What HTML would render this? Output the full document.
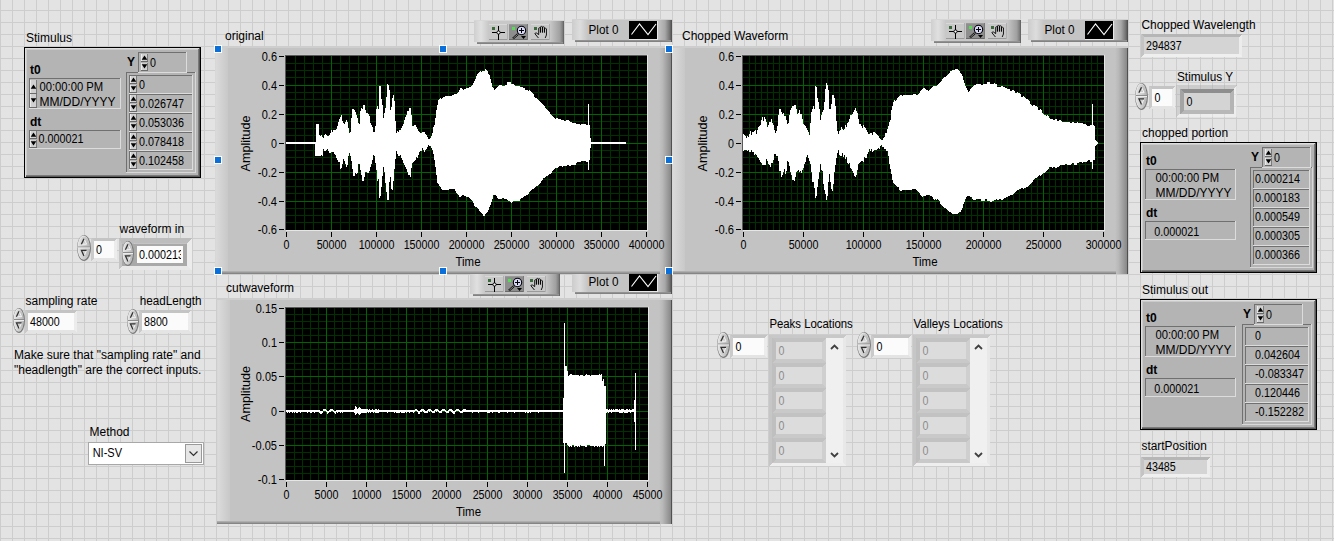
<!DOCTYPE html>
<html><head><meta charset="utf-8"><title>LabVIEW Front Panel</title>
<style>html,body{margin:0;padding:0;width:1334px;height:541px;overflow:hidden;background:#e3e3e3;}
text{font-family:"Liberation Sans",sans-serif;}</style></head>
<body><svg width="1334" height="541" viewBox="0 0 1334 541" style="display:block" font-family="Liberation Sans, sans-serif" shape-rendering="crispEdges"><defs><pattern id="grid" x="0" y="10" width="12" height="12" patternUnits="userSpaceOnUse"><rect width="12" height="12" fill="#e3e3e3"/><rect x="0" y="0" width="12" height="1" fill="#cdcdcd"/><rect x="0" y="0" width="1" height="12" fill="#cdcdcd"/></pattern><linearGradient id="g1" x1="0" y1="0" x2="1" y2="0"><stop offset="0" stop-color="#d6d6d6"/><stop offset="0.1" stop-color="#dadada"/><stop offset="1" stop-color="#c8c8c8"/></linearGradient><linearGradient id="g2" x1="0" y1="0" x2="1" y2="0"><stop offset="0" stop-color="#c3c3c3"/><stop offset="0.3" stop-color="#b8b8b8"/><stop offset="1" stop-color="#888888"/></linearGradient><linearGradient id="g3" x1="0" y1="0" x2="0" y2="1"><stop offset="0" stop-color="#b8b8b8"/><stop offset="0.5" stop-color="#9a9a9a"/><stop offset="1" stop-color="#7a7a7a"/></linearGradient><linearGradient id="g4" x1="0" y1="0" x2="1" y2="0"><stop offset="0" stop-color="#d6d6d6"/><stop offset="0.1" stop-color="#dadada"/><stop offset="1" stop-color="#c8c8c8"/></linearGradient><linearGradient id="g5" x1="0" y1="0" x2="1" y2="0"><stop offset="0" stop-color="#c3c3c3"/><stop offset="0.3" stop-color="#b8b8b8"/><stop offset="1" stop-color="#888888"/></linearGradient><linearGradient id="g6" x1="0" y1="0" x2="0" y2="1"><stop offset="0" stop-color="#b8b8b8"/><stop offset="0.5" stop-color="#9a9a9a"/><stop offset="1" stop-color="#7a7a7a"/></linearGradient><linearGradient id="g7" x1="0" y1="0" x2="1" y2="0"><stop offset="0" stop-color="#d6d6d6"/><stop offset="0.1" stop-color="#dadada"/><stop offset="1" stop-color="#c8c8c8"/></linearGradient><linearGradient id="g8" x1="0" y1="0" x2="1" y2="0"><stop offset="0" stop-color="#c3c3c3"/><stop offset="0.3" stop-color="#b8b8b8"/><stop offset="1" stop-color="#888888"/></linearGradient><linearGradient id="g9" x1="0" y1="0" x2="0" y2="1"><stop offset="0" stop-color="#b8b8b8"/><stop offset="0.5" stop-color="#9a9a9a"/><stop offset="1" stop-color="#7a7a7a"/></linearGradient><linearGradient id="g10" x1="0" y1="0" x2="1" y2="0"><stop offset="0" stop-color="#e2e2e2"/><stop offset="0.5" stop-color="#cdcdcd"/><stop offset="1" stop-color="#b4b4b4"/></linearGradient><linearGradient id="g11" x1="0" y1="0" x2="1" y2="0"><stop offset="0" stop-color="#e2e2e2"/><stop offset="0.5" stop-color="#cdcdcd"/><stop offset="1" stop-color="#b4b4b4"/></linearGradient><linearGradient id="g12" x1="0" y1="0" x2="1" y2="0"><stop offset="0" stop-color="#e2e2e2"/><stop offset="0.5" stop-color="#cdcdcd"/><stop offset="1" stop-color="#b4b4b4"/></linearGradient><linearGradient id="g13" x1="0" y1="0" x2="1" y2="0"><stop offset="0" stop-color="#e2e2e2"/><stop offset="0.5" stop-color="#cdcdcd"/><stop offset="1" stop-color="#b4b4b4"/></linearGradient><linearGradient id="g14" x1="0" y1="0" x2="1" y2="0"><stop offset="0" stop-color="#e2e2e2"/><stop offset="0.5" stop-color="#cdcdcd"/><stop offset="1" stop-color="#b4b4b4"/></linearGradient><linearGradient id="g15" x1="0" y1="0" x2="1" y2="0"><stop offset="0" stop-color="#e2e2e2"/><stop offset="0.5" stop-color="#cdcdcd"/><stop offset="1" stop-color="#b4b4b4"/></linearGradient><linearGradient id="g16" x1="0" y1="0" x2="1" y2="0"><stop offset="0" stop-color="#e2e2e2"/><stop offset="0.5" stop-color="#cdcdcd"/><stop offset="1" stop-color="#b4b4b4"/></linearGradient><linearGradient id="g17" x1="0" y1="0" x2="1" y2="0"><stop offset="0" stop-color="#e2e2e2"/><stop offset="0.5" stop-color="#cdcdcd"/><stop offset="1" stop-color="#b4b4b4"/></linearGradient><linearGradient id="g18" x1="0" y1="0" x2="1" y2="0"><stop offset="0" stop-color="#cfcfcf"/><stop offset="0.5" stop-color="#e0e0e0"/><stop offset="1" stop-color="#cacaca"/></linearGradient><linearGradient id="g19" x1="0" y1="0" x2="1" y2="0"><stop offset="0" stop-color="#c8c8c8"/><stop offset="0.7" stop-color="#a0a0a0"/><stop offset="0.93" stop-color="#777"/><stop offset="1" stop-color="#555"/></linearGradient><linearGradient id="g20" x1="0" y1="0" x2="0" y2="1"><stop offset="0" stop-color="#9a9a9a"/><stop offset="1" stop-color="#7a7a7a"/></linearGradient><linearGradient id="g21" x1="0" y1="0" x2="1" y2="0"><stop offset="0" stop-color="#cccccc"/><stop offset="0.5" stop-color="#dddddd"/><stop offset="1" stop-color="#c4c4c4"/></linearGradient><linearGradient id="g22" x1="0" y1="0" x2="1" y2="0"><stop offset="0" stop-color="#c4c4c4"/><stop offset="0.5" stop-color="#a8a8a8"/><stop offset="0.85" stop-color="#707070"/><stop offset="1" stop-color="#484848"/></linearGradient><linearGradient id="g23" x1="0" y1="0" x2="0" y2="1"><stop offset="0" stop-color="#9a9a9a"/><stop offset="1" stop-color="#7a7a7a"/></linearGradient><linearGradient id="g24" x1="0" y1="0" x2="1" y2="0"><stop offset="0" stop-color="#cfcfcf"/><stop offset="0.5" stop-color="#e0e0e0"/><stop offset="1" stop-color="#cacaca"/></linearGradient><linearGradient id="g25" x1="0" y1="0" x2="1" y2="0"><stop offset="0" stop-color="#c8c8c8"/><stop offset="0.7" stop-color="#a0a0a0"/><stop offset="0.93" stop-color="#777"/><stop offset="1" stop-color="#555"/></linearGradient><linearGradient id="g26" x1="0" y1="0" x2="0" y2="1"><stop offset="0" stop-color="#9a9a9a"/><stop offset="1" stop-color="#7a7a7a"/></linearGradient><linearGradient id="g27" x1="0" y1="0" x2="1" y2="0"><stop offset="0" stop-color="#cccccc"/><stop offset="0.5" stop-color="#dddddd"/><stop offset="1" stop-color="#c4c4c4"/></linearGradient><linearGradient id="g28" x1="0" y1="0" x2="1" y2="0"><stop offset="0" stop-color="#c4c4c4"/><stop offset="0.5" stop-color="#a8a8a8"/><stop offset="0.85" stop-color="#707070"/><stop offset="1" stop-color="#484848"/></linearGradient><linearGradient id="g29" x1="0" y1="0" x2="0" y2="1"><stop offset="0" stop-color="#9a9a9a"/><stop offset="1" stop-color="#7a7a7a"/></linearGradient><clipPath id="clipcut"><rect x="0" y="274" width="1334" height="30"/></clipPath><linearGradient id="g30" x1="0" y1="0" x2="1" y2="0"><stop offset="0" stop-color="#cfcfcf"/><stop offset="0.5" stop-color="#e0e0e0"/><stop offset="1" stop-color="#cacaca"/></linearGradient><linearGradient id="g31" x1="0" y1="0" x2="1" y2="0"><stop offset="0" stop-color="#c8c8c8"/><stop offset="0.7" stop-color="#a0a0a0"/><stop offset="0.93" stop-color="#777"/><stop offset="1" stop-color="#555"/></linearGradient><linearGradient id="g32" x1="0" y1="0" x2="0" y2="1"><stop offset="0" stop-color="#9a9a9a"/><stop offset="1" stop-color="#7a7a7a"/></linearGradient><linearGradient id="g33" x1="0" y1="0" x2="1" y2="0"><stop offset="0" stop-color="#cccccc"/><stop offset="0.5" stop-color="#dddddd"/><stop offset="1" stop-color="#c4c4c4"/></linearGradient><linearGradient id="g34" x1="0" y1="0" x2="1" y2="0"><stop offset="0" stop-color="#c4c4c4"/><stop offset="0.5" stop-color="#a8a8a8"/><stop offset="0.85" stop-color="#707070"/><stop offset="1" stop-color="#484848"/></linearGradient><linearGradient id="g35" x1="0" y1="0" x2="0" y2="1"><stop offset="0" stop-color="#9a9a9a"/><stop offset="1" stop-color="#7a7a7a"/></linearGradient></defs><rect x="0" y="0" width="1334" height="541" fill="url(#grid)" /><rect x="215" y="47" width="457" height="227" fill="#c3c3c3" /><rect x="215" y="47" width="13" height="227" fill="url(#g1)" /><rect x="659" y="47" width="12" height="227" fill="url(#g2)" /><rect x="671" y="47" width="1" height="227" fill="#505050" /><rect x="215" y="47" width="457" height="1" fill="#cecece" /><rect x="215" y="271" width="445" height="3" fill="url(#g3)" /><rect x="285" y="54" width="363" height="1" fill="#c8c8c8" /><rect x="285" y="55" width="362" height="1" fill="#5a5a5a" /><rect x="285" y="55" width="1" height="175" fill="#5a5a5a" /><rect x="286" y="230" width="362" height="1" fill="#e6e6e6" /><rect x="647" y="55" width="1" height="176" fill="#e6e6e6" /><rect x="286" y="56" width="361" height="174" fill="#000" /><path d="M295 56h1v174h-1zM304 56h1v174h-1zM313 56h1v174h-1zM322 56h1v174h-1zM340 56h1v174h-1zM349 56h1v174h-1zM358 56h1v174h-1zM367 56h1v174h-1zM385 56h1v174h-1zM394 56h1v174h-1zM403 56h1v174h-1zM412 56h1v174h-1zM430 56h1v174h-1zM439 56h1v174h-1zM448 56h1v174h-1zM457 56h1v174h-1zM475 56h1v174h-1zM484 56h1v174h-1zM493 56h1v174h-1zM502 56h1v174h-1zM520 56h1v174h-1zM529 56h1v174h-1zM538 56h1v174h-1zM547 56h1v174h-1zM565 56h1v174h-1zM574 56h1v174h-1zM583 56h1v174h-1zM592 56h1v174h-1zM610 56h1v174h-1zM619 56h1v174h-1zM628 56h1v174h-1zM637 56h1v174h-1zM286 63h361v1h-361zM286 70h361v1h-361zM286 77h361v1h-361zM286 92h361v1h-361zM286 99h361v1h-361zM286 106h361v1h-361zM286 121h361v1h-361zM286 128h361v1h-361zM286 135h361v1h-361zM286 150h361v1h-361zM286 157h361v1h-361zM286 164h361v1h-361zM286 179h361v1h-361zM286 186h361v1h-361zM286 193h361v1h-361zM286 208h361v1h-361zM286 215h361v1h-361zM286 222h361v1h-361z" fill="#003200"/><path d="M331 56h1v174h-1zM376 56h1v174h-1zM421 56h1v174h-1zM466 56h1v174h-1zM511 56h1v174h-1zM556 56h1v174h-1zM601 56h1v174h-1zM286 85h361v1h-361zM286 114h361v1h-361zM286 143h361v1h-361zM286 172h361v1h-361zM286 201h361v1h-361z" fill="#006400"/><rect x="286" y="232" width="1" height="5" fill="#000" /><text x="286.5" y="249" font-size="12" font-weight="normal" fill="#000" text-anchor="middle" textLength="5.95" lengthAdjust="spacingAndGlyphs" >0</text><rect x="331" y="232" width="1" height="5" fill="#000" /><text x="331.5" y="249" font-size="12" font-weight="normal" fill="#000" text-anchor="middle" textLength="29.75" lengthAdjust="spacingAndGlyphs" >50000</text><rect x="376" y="232" width="1" height="5" fill="#000" /><text x="376.5" y="249" font-size="12" font-weight="normal" fill="#000" text-anchor="middle" textLength="35.70" lengthAdjust="spacingAndGlyphs" >100000</text><rect x="421" y="232" width="1" height="5" fill="#000" /><text x="421.5" y="249" font-size="12" font-weight="normal" fill="#000" text-anchor="middle" textLength="35.70" lengthAdjust="spacingAndGlyphs" >150000</text><rect x="466" y="232" width="1" height="5" fill="#000" /><text x="466.5" y="249" font-size="12" font-weight="normal" fill="#000" text-anchor="middle" textLength="35.70" lengthAdjust="spacingAndGlyphs" >200000</text><rect x="511" y="232" width="1" height="5" fill="#000" /><text x="511.5" y="249" font-size="12" font-weight="normal" fill="#000" text-anchor="middle" textLength="35.70" lengthAdjust="spacingAndGlyphs" >250000</text><rect x="556" y="232" width="1" height="5" fill="#000" /><text x="556.5" y="249" font-size="12" font-weight="normal" fill="#000" text-anchor="middle" textLength="35.70" lengthAdjust="spacingAndGlyphs" >300000</text><rect x="601" y="232" width="1" height="5" fill="#000" /><text x="601.5" y="249" font-size="12" font-weight="normal" fill="#000" text-anchor="middle" textLength="35.70" lengthAdjust="spacingAndGlyphs" >350000</text><rect x="646" y="232" width="1" height="5" fill="#000" /><text x="646.5" y="249" font-size="12" font-weight="normal" fill="#000" text-anchor="middle" textLength="35.70" lengthAdjust="spacingAndGlyphs" >400000</text><rect x="279" y="56" width="5" height="1" fill="#000" /><text x="277" y="61" font-size="12" font-weight="normal" fill="#000" text-anchor="end" textLength="15.23" lengthAdjust="spacingAndGlyphs" >0.6</text><rect x="279" y="85" width="5" height="1" fill="#000" /><text x="277" y="90" font-size="12" font-weight="normal" fill="#000" text-anchor="end" textLength="15.23" lengthAdjust="spacingAndGlyphs" >0.4</text><rect x="279" y="114" width="5" height="1" fill="#000" /><text x="277" y="119" font-size="12" font-weight="normal" fill="#000" text-anchor="end" textLength="15.23" lengthAdjust="spacingAndGlyphs" >0.2</text><rect x="279" y="143" width="5" height="1" fill="#000" /><text x="277" y="148" font-size="12" font-weight="normal" fill="#000" text-anchor="end" textLength="5.95" lengthAdjust="spacingAndGlyphs" >0</text><rect x="279" y="172" width="5" height="1" fill="#000" /><text x="277" y="177" font-size="12" font-weight="normal" fill="#000" text-anchor="end" textLength="19.23" lengthAdjust="spacingAndGlyphs" >-0.2</text><rect x="279" y="201" width="5" height="1" fill="#000" /><text x="277" y="206" font-size="12" font-weight="normal" fill="#000" text-anchor="end" textLength="19.23" lengthAdjust="spacingAndGlyphs" >-0.4</text><rect x="279" y="229" width="5" height="1" fill="#000" /><text x="277" y="234" font-size="12" font-weight="normal" fill="#000" text-anchor="end" textLength="19.23" lengthAdjust="spacingAndGlyphs" >-0.6</text><text x="468.0" y="266" font-size="12" font-weight="normal" fill="#000" text-anchor="middle" textLength="25.00" lengthAdjust="spacingAndGlyphs" >Time</text><text x="0" y="0" font-size="12" fill="#000" text-anchor="middle" textLength="56" lengthAdjust="spacingAndGlyphs" transform="translate(249.5,143.5) rotate(-90)">Amplitude</text><text x="225" y="40" font-size="12" font-weight="normal" fill="#000" text-anchor="start"  >original</text><rect x="672" y="47" width="456" height="227" fill="#c3c3c3" /><rect x="672" y="47" width="13" height="227" fill="url(#g4)" /><rect x="1115" y="47" width="12" height="227" fill="url(#g5)" /><rect x="1127" y="47" width="1" height="227" fill="#505050" /><rect x="672" y="47" width="456" height="1" fill="#cecece" /><rect x="672" y="271" width="444" height="3" fill="url(#g6)" /><rect x="742" y="54" width="363" height="1" fill="#c8c8c8" /><rect x="742" y="55" width="362" height="1" fill="#5a5a5a" /><rect x="742" y="55" width="1" height="175" fill="#5a5a5a" /><rect x="743" y="230" width="362" height="1" fill="#e6e6e6" /><rect x="1104" y="55" width="1" height="176" fill="#e6e6e6" /><rect x="743" y="56" width="361" height="174" fill="#000" /><path d="M749 56h1v174h-1zM755 56h1v174h-1zM761 56h1v174h-1zM767 56h1v174h-1zM773 56h1v174h-1zM779 56h1v174h-1zM785 56h1v174h-1zM791 56h1v174h-1zM797 56h1v174h-1zM809 56h1v174h-1zM815 56h1v174h-1zM821 56h1v174h-1zM827 56h1v174h-1zM833 56h1v174h-1zM839 56h1v174h-1zM845 56h1v174h-1zM851 56h1v174h-1zM857 56h1v174h-1zM869 56h1v174h-1zM875 56h1v174h-1zM881 56h1v174h-1zM887 56h1v174h-1zM893 56h1v174h-1zM899 56h1v174h-1zM905 56h1v174h-1zM911 56h1v174h-1zM917 56h1v174h-1zM929 56h1v174h-1zM935 56h1v174h-1zM941 56h1v174h-1zM947 56h1v174h-1zM953 56h1v174h-1zM959 56h1v174h-1zM965 56h1v174h-1zM971 56h1v174h-1zM977 56h1v174h-1zM989 56h1v174h-1zM995 56h1v174h-1zM1001 56h1v174h-1zM1007 56h1v174h-1zM1013 56h1v174h-1zM1019 56h1v174h-1zM1025 56h1v174h-1zM1031 56h1v174h-1zM1037 56h1v174h-1zM1049 56h1v174h-1zM1055 56h1v174h-1zM1061 56h1v174h-1zM1067 56h1v174h-1zM1073 56h1v174h-1zM1079 56h1v174h-1zM1085 56h1v174h-1zM1091 56h1v174h-1zM1097 56h1v174h-1zM743 63h361v1h-361zM743 70h361v1h-361zM743 77h361v1h-361zM743 92h361v1h-361zM743 99h361v1h-361zM743 106h361v1h-361zM743 121h361v1h-361zM743 128h361v1h-361zM743 135h361v1h-361zM743 150h361v1h-361zM743 157h361v1h-361zM743 164h361v1h-361zM743 179h361v1h-361zM743 186h361v1h-361zM743 193h361v1h-361zM743 208h361v1h-361zM743 215h361v1h-361zM743 222h361v1h-361z" fill="#003200"/><path d="M803 56h1v174h-1zM863 56h1v174h-1zM923 56h1v174h-1zM983 56h1v174h-1zM1043 56h1v174h-1zM743 85h361v1h-361zM743 114h361v1h-361zM743 143h361v1h-361zM743 172h361v1h-361zM743 201h361v1h-361z" fill="#006400"/><rect x="743" y="232" width="1" height="5" fill="#000" /><text x="743.5" y="249" font-size="12" font-weight="normal" fill="#000" text-anchor="middle" textLength="5.95" lengthAdjust="spacingAndGlyphs" >0</text><rect x="803" y="232" width="1" height="5" fill="#000" /><text x="803.5" y="249" font-size="12" font-weight="normal" fill="#000" text-anchor="middle" textLength="29.75" lengthAdjust="spacingAndGlyphs" >50000</text><rect x="863" y="232" width="1" height="5" fill="#000" /><text x="863.5" y="249" font-size="12" font-weight="normal" fill="#000" text-anchor="middle" textLength="35.70" lengthAdjust="spacingAndGlyphs" >100000</text><rect x="923" y="232" width="1" height="5" fill="#000" /><text x="923.5" y="249" font-size="12" font-weight="normal" fill="#000" text-anchor="middle" textLength="35.70" lengthAdjust="spacingAndGlyphs" >150000</text><rect x="983" y="232" width="1" height="5" fill="#000" /><text x="983.5" y="249" font-size="12" font-weight="normal" fill="#000" text-anchor="middle" textLength="35.70" lengthAdjust="spacingAndGlyphs" >200000</text><rect x="1043" y="232" width="1" height="5" fill="#000" /><text x="1043.5" y="249" font-size="12" font-weight="normal" fill="#000" text-anchor="middle" textLength="35.70" lengthAdjust="spacingAndGlyphs" >250000</text><rect x="1103" y="232" width="1" height="5" fill="#000" /><text x="1103.5" y="249" font-size="12" font-weight="normal" fill="#000" text-anchor="middle" textLength="35.70" lengthAdjust="spacingAndGlyphs" >300000</text><rect x="736" y="56" width="5" height="1" fill="#000" /><text x="734" y="61" font-size="12" font-weight="normal" fill="#000" text-anchor="end" textLength="15.23" lengthAdjust="spacingAndGlyphs" >0.6</text><rect x="736" y="85" width="5" height="1" fill="#000" /><text x="734" y="90" font-size="12" font-weight="normal" fill="#000" text-anchor="end" textLength="15.23" lengthAdjust="spacingAndGlyphs" >0.4</text><rect x="736" y="114" width="5" height="1" fill="#000" /><text x="734" y="119" font-size="12" font-weight="normal" fill="#000" text-anchor="end" textLength="15.23" lengthAdjust="spacingAndGlyphs" >0.2</text><rect x="736" y="143" width="5" height="1" fill="#000" /><text x="734" y="148" font-size="12" font-weight="normal" fill="#000" text-anchor="end" textLength="5.95" lengthAdjust="spacingAndGlyphs" >0</text><rect x="736" y="172" width="5" height="1" fill="#000" /><text x="734" y="177" font-size="12" font-weight="normal" fill="#000" text-anchor="end" textLength="19.23" lengthAdjust="spacingAndGlyphs" >-0.2</text><rect x="736" y="201" width="5" height="1" fill="#000" /><text x="734" y="206" font-size="12" font-weight="normal" fill="#000" text-anchor="end" textLength="19.23" lengthAdjust="spacingAndGlyphs" >-0.4</text><rect x="736" y="229" width="5" height="1" fill="#000" /><text x="734" y="234" font-size="12" font-weight="normal" fill="#000" text-anchor="end" textLength="19.23" lengthAdjust="spacingAndGlyphs" >-0.6</text><text x="925.0" y="266" font-size="12" font-weight="normal" fill="#000" text-anchor="middle" textLength="25.00" lengthAdjust="spacingAndGlyphs" >Time</text><text x="0" y="0" font-size="12" fill="#000" text-anchor="middle" textLength="56" lengthAdjust="spacingAndGlyphs" transform="translate(706.5,143.5) rotate(-90)">Amplitude</text><text x="682" y="40" font-size="12" font-weight="normal" fill="#000" text-anchor="start"  >Chopped Waveform</text><rect x="217" y="299" width="455" height="225" fill="#c3c3c3" /><rect x="217" y="299" width="13" height="225" fill="url(#g7)" /><rect x="659" y="299" width="12" height="225" fill="url(#g8)" /><rect x="671" y="299" width="1" height="225" fill="#505050" /><rect x="217" y="299" width="455" height="1" fill="#cecece" /><rect x="217" y="521" width="443" height="3" fill="url(#g9)" /><rect x="285" y="306" width="364" height="1" fill="#c8c8c8" /><rect x="285" y="307" width="363" height="1" fill="#5a5a5a" /><rect x="285" y="307" width="1" height="173" fill="#5a5a5a" /><rect x="286" y="480" width="363" height="1" fill="#e6e6e6" /><rect x="648" y="307" width="1" height="174" fill="#e6e6e6" /><rect x="286" y="308" width="362" height="172" fill="#000" /><path d="M294 308h1v172h-1zM302 308h1v172h-1zM310 308h1v172h-1zM318 308h1v172h-1zM334 308h1v172h-1zM342 308h1v172h-1zM350 308h1v172h-1zM358 308h1v172h-1zM374 308h1v172h-1zM382 308h1v172h-1zM390 308h1v172h-1zM398 308h1v172h-1zM414 308h1v172h-1zM422 308h1v172h-1zM430 308h1v172h-1zM438 308h1v172h-1zM454 308h1v172h-1zM462 308h1v172h-1zM471 308h1v172h-1zM479 308h1v172h-1zM495 308h1v172h-1zM503 308h1v172h-1zM511 308h1v172h-1zM519 308h1v172h-1zM535 308h1v172h-1zM543 308h1v172h-1zM551 308h1v172h-1zM559 308h1v172h-1zM575 308h1v172h-1zM583 308h1v172h-1zM591 308h1v172h-1zM599 308h1v172h-1zM615 308h1v172h-1zM623 308h1v172h-1zM631 308h1v172h-1zM639 308h1v172h-1zM286 314h362v1h-362zM286 321h362v1h-362zM286 328h362v1h-362zM286 335h362v1h-362zM286 349h362v1h-362zM286 356h362v1h-362zM286 363h362v1h-362zM286 369h362v1h-362zM286 383h362v1h-362zM286 390h362v1h-362zM286 397h362v1h-362zM286 404h362v1h-362zM286 418h362v1h-362zM286 424h362v1h-362zM286 431h362v1h-362zM286 438h362v1h-362zM286 452h362v1h-362zM286 459h362v1h-362zM286 466h362v1h-362zM286 473h362v1h-362z" fill="#003200"/><path d="M326 308h1v172h-1zM366 308h1v172h-1zM406 308h1v172h-1zM446 308h1v172h-1zM487 308h1v172h-1zM527 308h1v172h-1zM567 308h1v172h-1zM607 308h1v172h-1zM286 342h362v1h-362zM286 376h362v1h-362zM286 411h362v1h-362zM286 445h362v1h-362z" fill="#006400"/><rect x="286" y="482" width="1" height="5" fill="#000" /><text x="286.5" y="499" font-size="12" font-weight="normal" fill="#000" text-anchor="middle" textLength="5.95" lengthAdjust="spacingAndGlyphs" >0</text><rect x="326" y="482" width="1" height="5" fill="#000" /><text x="326.5" y="499" font-size="12" font-weight="normal" fill="#000" text-anchor="middle" textLength="23.80" lengthAdjust="spacingAndGlyphs" >5000</text><rect x="366" y="482" width="1" height="5" fill="#000" /><text x="366.5" y="499" font-size="12" font-weight="normal" fill="#000" text-anchor="middle" textLength="29.75" lengthAdjust="spacingAndGlyphs" >10000</text><rect x="406" y="482" width="1" height="5" fill="#000" /><text x="406.5" y="499" font-size="12" font-weight="normal" fill="#000" text-anchor="middle" textLength="29.75" lengthAdjust="spacingAndGlyphs" >15000</text><rect x="446" y="482" width="1" height="5" fill="#000" /><text x="446.5" y="499" font-size="12" font-weight="normal" fill="#000" text-anchor="middle" textLength="29.75" lengthAdjust="spacingAndGlyphs" >20000</text><rect x="487" y="482" width="1" height="5" fill="#000" /><text x="487.5" y="499" font-size="12" font-weight="normal" fill="#000" text-anchor="middle" textLength="29.75" lengthAdjust="spacingAndGlyphs" >25000</text><rect x="527" y="482" width="1" height="5" fill="#000" /><text x="527.5" y="499" font-size="12" font-weight="normal" fill="#000" text-anchor="middle" textLength="29.75" lengthAdjust="spacingAndGlyphs" >30000</text><rect x="567" y="482" width="1" height="5" fill="#000" /><text x="567.5" y="499" font-size="12" font-weight="normal" fill="#000" text-anchor="middle" textLength="29.75" lengthAdjust="spacingAndGlyphs" >35000</text><rect x="607" y="482" width="1" height="5" fill="#000" /><text x="607.5" y="499" font-size="12" font-weight="normal" fill="#000" text-anchor="middle" textLength="29.75" lengthAdjust="spacingAndGlyphs" >40000</text><rect x="647" y="482" width="1" height="5" fill="#000" /><text x="647.5" y="499" font-size="12" font-weight="normal" fill="#000" text-anchor="middle" textLength="29.75" lengthAdjust="spacingAndGlyphs" >45000</text><rect x="279" y="308" width="5" height="1" fill="#000" /><text x="277" y="313" font-size="12" font-weight="normal" fill="#000" text-anchor="end" textLength="21.18" lengthAdjust="spacingAndGlyphs" >0.15</text><rect x="279" y="342" width="5" height="1" fill="#000" /><text x="277" y="347" font-size="12" font-weight="normal" fill="#000" text-anchor="end" textLength="15.23" lengthAdjust="spacingAndGlyphs" >0.1</text><rect x="279" y="376" width="5" height="1" fill="#000" /><text x="277" y="381" font-size="12" font-weight="normal" fill="#000" text-anchor="end" textLength="21.18" lengthAdjust="spacingAndGlyphs" >0.05</text><rect x="279" y="411" width="5" height="1" fill="#000" /><text x="277" y="416" font-size="12" font-weight="normal" fill="#000" text-anchor="end" textLength="5.95" lengthAdjust="spacingAndGlyphs" >0</text><rect x="279" y="445" width="5" height="1" fill="#000" /><text x="277" y="450" font-size="12" font-weight="normal" fill="#000" text-anchor="end" textLength="25.18" lengthAdjust="spacingAndGlyphs" >-0.05</text><rect x="279" y="479" width="5" height="1" fill="#000" /><text x="277" y="484" font-size="12" font-weight="normal" fill="#000" text-anchor="end" textLength="19.23" lengthAdjust="spacingAndGlyphs" >-0.1</text><text x="468.5" y="516" font-size="12" font-weight="normal" fill="#000" text-anchor="middle" textLength="25.00" lengthAdjust="spacingAndGlyphs" >Time</text><text x="0" y="0" font-size="12" fill="#000" text-anchor="middle" textLength="56" lengthAdjust="spacingAndGlyphs" transform="translate(249.5,394) rotate(-90)">Amplitude</text><text x="226" y="292" font-size="12" font-weight="normal" fill="#000" text-anchor="start"  >cutwaveform</text><rect x="214" y="45" width="8" height="8" fill="#ffffff" /><rect x="215" y="46" width="6" height="6" fill="#0a6fd8" /><rect x="214" y="156" width="8" height="8" fill="#ffffff" /><rect x="215" y="157" width="6" height="6" fill="#0a6fd8" /><rect x="214" y="267" width="8" height="8" fill="#ffffff" /><rect x="215" y="268" width="6" height="6" fill="#0a6fd8" /><rect x="439" y="45" width="8" height="8" fill="#ffffff" /><rect x="440" y="46" width="6" height="6" fill="#0a6fd8" /><rect x="439" y="267" width="8" height="8" fill="#ffffff" /><rect x="440" y="268" width="6" height="6" fill="#0a6fd8" /><rect x="665" y="45" width="8" height="8" fill="#ffffff" /><rect x="666" y="46" width="6" height="6" fill="#0a6fd8" /><rect x="665" y="156" width="8" height="8" fill="#ffffff" /><rect x="666" y="157" width="6" height="6" fill="#0a6fd8" /><rect x="665" y="267" width="8" height="8" fill="#ffffff" /><rect x="666" y="268" width="6" height="6" fill="#0a6fd8" /><svg x="286" y="56" width="361" height="174" viewBox="286 56 361 174" overflow="hidden"><path d="M286 142h1v2h-1zM287 142h1v2h-1zM288 142h1v2h-1zM289 142h1v2h-1zM290 142h1v2h-1zM291 142h1v2h-1zM292 142h1v2h-1zM293 142h1v2h-1zM294 142h1v2h-1zM295 142h1v2h-1zM296 142h1v2h-1zM297 142h1v2h-1zM298 142h1v2h-1zM299 142h1v2h-1zM300 142h1v2h-1zM301 142h1v2h-1zM302 142h1v2h-1zM303 142h1v2h-1zM304 142h1v2h-1zM305 142h1v2h-1zM306 142h1v2h-1zM307 142h1v2h-1zM308 142h1v2h-1zM309 142h1v2h-1zM310 142h1v2h-1zM311 142h1v2h-1zM312 142h1v2h-1zM313 142h1v2h-1zM314 142h1v2h-1zM315 142h1v14h-1zM316 124h1v32h-1zM317 124h1v32h-1zM318 124h1v32h-1zM319 135h1v21h-1zM320 136h1v20h-1zM321 135h1v20h-1zM322 137h1v19h-1zM323 138h1v11h-1zM324 135h1v16h-1zM325 134h1v17h-1zM326 135h1v15h-1zM327 136h1v13h-1zM328 136h1v15h-1zM329 135h1v18h-1zM330 133h1v20h-1zM331 130h1v22h-1zM332 132h1v20h-1zM333 130h1v22h-1zM334 130h1v24h-1zM335 130h1v25h-1zM336 129h1v29h-1zM337 126h1v34h-1zM338 122h1v40h-1zM339 119h1v43h-1zM340 117h1v52h-1zM341 115h1v53h-1zM342 121h1v43h-1zM343 123h1v36h-1zM344 124h1v37h-1zM345 122h1v42h-1zM346 120h1v47h-1zM347 122h1v43h-1zM348 128h1v28h-1zM349 133h1v20h-1zM350 132h1v24h-1zM351 118h1v43h-1zM352 109h1v60h-1zM353 109h1v67h-1zM354 110h1v66h-1zM355 112h1v61h-1zM356 115h1v59h-1zM357 118h1v55h-1zM358 123h1v41h-1zM359 124h1v40h-1zM360 111h1v59h-1zM361 108h1v67h-1zM362 109h1v72h-1zM363 105h1v76h-1zM364 105h1v72h-1zM365 110h1v62h-1zM366 113h1v59h-1zM367 113h1v60h-1zM368 114h1v59h-1zM369 116h1v55h-1zM370 123h1v44h-1zM371 125h1v39h-1zM372 127h1v33h-1zM373 132h1v23h-1zM374 132h1v24h-1zM375 126h1v37h-1zM376 109h1v61h-1zM377 106h1v75h-1zM378 109h1v70h-1zM379 86h1v112h-1zM380 86h1v110h-1zM381 99h1v88h-1zM382 105h1v71h-1zM383 118h1v49h-1zM384 113h1v59h-1zM385 108h1v75h-1zM386 97h1v95h-1zM387 84h1v116h-1zM388 85h1v115h-1zM389 90h1v92h-1zM390 110h1v67h-1zM391 107h1v82h-1zM392 98h1v92h-1zM393 95h1v86h-1zM394 101h1v68h-1zM395 121h1v38h-1zM396 133h1v18h-1zM397 131h1v23h-1zM398 132h1v24h-1zM399 130h1v26h-1zM400 130h1v25h-1zM401 128h1v30h-1zM402 126h1v34h-1zM403 124h1v39h-1zM404 120h1v45h-1zM405 117h1v50h-1zM406 115h1v54h-1zM407 111h1v61h-1zM408 111h1v64h-1zM409 108h1v67h-1zM410 108h1v69h-1zM411 115h1v53h-1zM412 126h1v37h-1zM413 126h1v36h-1zM414 125h1v36h-1zM415 125h1v35h-1zM416 127h1v30h-1zM417 129h1v29h-1zM418 131h1v24h-1zM419 132h1v20h-1zM420 133h1v18h-1zM421 133h1v18h-1zM422 132h1v16h-1zM423 132h1v18h-1zM424 132h1v20h-1zM425 134h1v16h-1zM426 135h1v14h-1zM427 137h1v10h-1zM428 139h1v6h-1zM429 139h1v7h-1zM430 138h1v8h-1zM431 136h1v12h-1zM432 133h1v17h-1zM433 127h1v27h-1zM434 125h1v35h-1zM435 118h1v49h-1zM436 110h1v65h-1zM437 105h1v78h-1zM438 100h1v84h-1zM439 99h1v87h-1zM440 98h1v89h-1zM441 99h1v90h-1zM442 98h1v92h-1zM443 97h1v93h-1zM444 97h1v93h-1zM445 96h1v94h-1zM446 96h1v94h-1zM447 96h1v94h-1zM448 96h1v94h-1zM449 96h1v93h-1zM450 96h1v93h-1zM451 96h1v93h-1zM452 95h1v94h-1zM453 95h1v94h-1zM454 94h1v95h-1zM455 94h1v97h-1zM456 94h1v99h-1zM457 93h1v101h-1zM458 92h1v103h-1zM459 90h1v107h-1zM460 88h1v109h-1zM461 88h1v108h-1zM462 89h1v106h-1zM463 90h1v105h-1zM464 89h1v107h-1zM465 89h1v107h-1zM466 88h1v109h-1zM467 88h1v109h-1zM468 88h1v109h-1zM469 87h1v111h-1zM470 87h1v112h-1zM471 86h1v114h-1zM472 85h1v116h-1zM473 83h1v120h-1zM474 81h1v125h-1zM475 79h1v128h-1zM476 76h1v131h-1zM477 74h1v134h-1zM478 73h1v136h-1zM479 72h1v139h-1zM480 71h1v141h-1zM481 72h1v141h-1zM482 71h1v143h-1zM483 71h1v145h-1zM484 71h1v145h-1zM485 69h1v145h-1zM486 70h1v143h-1zM487 71h1v141h-1zM488 74h1v136h-1zM489 75h1v132h-1zM490 79h1v126h-1zM491 83h1v119h-1zM492 87h1v112h-1zM493 88h1v107h-1zM494 90h1v105h-1zM495 89h1v106h-1zM496 88h1v108h-1zM497 87h1v111h-1zM498 86h1v113h-1zM499 85h1v114h-1zM500 85h1v114h-1zM501 85h1v114h-1zM502 86h1v112h-1zM503 86h1v112h-1zM504 86h1v113h-1zM505 85h1v114h-1zM506 85h1v114h-1zM507 82h1v118h-1zM508 82h1v119h-1zM509 82h1v119h-1zM510 82h1v120h-1zM511 84h1v119h-1zM512 84h1v118h-1zM513 84h1v117h-1zM514 85h1v116h-1zM515 86h1v115h-1zM516 86h1v115h-1zM517 86h1v115h-1zM518 86h1v115h-1zM519 86h1v115h-1zM520 87h1v112h-1zM521 87h1v111h-1zM522 87h1v111h-1zM523 88h1v109h-1zM524 88h1v108h-1zM525 90h1v106h-1zM526 90h1v105h-1zM527 90h1v105h-1zM528 91h1v103h-1zM529 90h1v102h-1zM530 91h1v100h-1zM531 92h1v98h-1zM532 93h1v96h-1zM533 94h1v95h-1zM534 97h1v91h-1zM535 98h1v89h-1zM536 98h1v88h-1zM537 99h1v87h-1zM538 100h1v85h-1zM539 101h1v83h-1zM540 102h1v81h-1zM541 103h1v78h-1zM542 104h1v76h-1zM543 105h1v73h-1zM544 106h1v72h-1zM545 108h1v69h-1zM546 109h1v67h-1zM547 110h1v66h-1zM548 111h1v64h-1zM549 112h1v62h-1zM550 114h1v60h-1zM551 115h1v58h-1zM552 116h1v55h-1zM553 117h1v53h-1zM554 118h1v51h-1zM555 119h1v49h-1zM556 118h1v50h-1zM557 118h1v50h-1zM558 119h1v48h-1zM559 119h1v47h-1zM560 119h1v47h-1zM561 120h1v46h-1zM562 120h1v47h-1zM563 120h1v46h-1zM564 121h1v45h-1zM565 121h1v45h-1zM566 120h1v46h-1zM567 120h1v45h-1zM568 120h1v45h-1zM569 121h1v45h-1zM570 122h1v44h-1zM571 122h1v43h-1zM572 123h1v42h-1zM573 123h1v42h-1zM574 123h1v42h-1zM575 123h1v42h-1zM576 124h1v39h-1zM577 124h1v38h-1zM578 124h1v38h-1zM579 124h1v38h-1zM580 125h1v37h-1zM581 124h1v37h-1zM582 124h1v37h-1zM583 124h1v37h-1zM584 124h1v37h-1zM585 124h1v37h-1zM586 125h1v37h-1zM587 125h1v37h-1zM588 125h1v36h-1zM589 125h1v35h-1zM590 138h1v10h-1zM591 142h1v2h-1zM592 142h1v2h-1zM593 142h1v2h-1zM594 142h1v2h-1zM595 142h1v2h-1zM596 142h1v2h-1zM597 142h1v2h-1zM598 142h1v2h-1zM599 142h1v2h-1zM600 142h1v2h-1zM601 142h1v2h-1zM602 142h1v2h-1zM603 142h1v2h-1zM604 142h1v2h-1zM605 142h1v2h-1zM606 142h1v2h-1zM607 142h1v2h-1zM608 142h1v2h-1zM609 142h1v2h-1zM610 142h1v2h-1zM611 142h1v2h-1zM612 142h1v2h-1zM613 142h1v2h-1zM614 142h1v2h-1zM615 142h1v2h-1zM616 142h1v2h-1zM617 142h1v2h-1zM618 142h1v2h-1zM619 142h1v2h-1zM620 142h1v2h-1zM621 142h1v2h-1zM622 142h1v2h-1zM623 142h1v2h-1zM624 142h1v2h-1zM625 142h1v2h-1z" fill="#fff"/><rect x="588" y="104" width="1" height="66" fill="#fff"/></svg><svg x="743" y="56" width="361" height="174" viewBox="743 56 361 174" overflow="hidden"><path d="M743 134h1v17h-1zM744 135h1v15h-1zM745 136h1v14h-1zM746 138h1v12h-1zM747 136h1v15h-1zM748 137h1v13h-1zM749 134h1v18h-1zM750 131h1v21h-1zM751 135h1v15h-1zM752 132h1v20h-1zM753 132h1v20h-1zM754 131h1v24h-1zM755 130h1v24h-1zM756 134h1v21h-1zM757 130h1v27h-1zM758 127h1v31h-1zM759 126h1v34h-1zM760 125h1v37h-1zM761 120h1v43h-1zM762 117h1v48h-1zM763 121h1v44h-1zM764 117h1v48h-1zM765 119h1v46h-1zM766 122h1v37h-1zM767 127h1v34h-1zM768 125h1v39h-1zM769 122h1v43h-1zM770 122h1v45h-1zM771 119h1v44h-1zM772 123h1v40h-1zM773 125h1v35h-1zM774 130h1v24h-1zM775 133h1v21h-1zM776 131h1v25h-1zM777 126h1v30h-1zM778 115h1v46h-1zM779 109h1v62h-1zM780 109h1v62h-1zM781 112h1v65h-1zM782 114h1v61h-1zM783 113h1v59h-1zM784 116h1v53h-1zM785 116h1v58h-1zM786 120h1v51h-1zM787 124h1v37h-1zM788 123h1v39h-1zM789 115h1v51h-1zM790 110h1v62h-1zM791 108h1v67h-1zM792 106h1v74h-1zM793 106h1v74h-1zM794 105h1v76h-1zM795 105h1v72h-1zM796 109h1v63h-1zM797 114h1v57h-1zM798 113h1v57h-1zM799 110h1v62h-1zM800 114h1v57h-1zM801 114h1v59h-1zM802 119h1v51h-1zM803 124h1v44h-1zM804 125h1v39h-1zM805 126h1v36h-1zM806 128h1v29h-1zM807 130h1v25h-1zM808 132h1v26h-1zM809 135h1v26h-1zM810 123h1v41h-1zM811 112h1v60h-1zM812 109h1v73h-1zM813 106h1v76h-1zM814 109h1v79h-1zM815 86h1v112h-1zM816 87h1v109h-1zM817 98h1v89h-1zM818 102h1v77h-1zM819 109h1v63h-1zM820 120h1v44h-1zM821 115h1v55h-1zM822 112h1v59h-1zM823 110h1v74h-1zM824 102h1v88h-1zM825 89h1v105h-1zM826 83h1v117h-1zM827 85h1v111h-1zM828 90h1v92h-1zM829 109h1v65h-1zM830 109h1v73h-1zM831 104h1v85h-1zM832 95h1v96h-1zM833 95h1v89h-1zM834 98h1v74h-1zM835 106h1v59h-1zM836 121h1v37h-1zM837 131h1v22h-1zM838 134h1v16h-1zM839 131h1v24h-1zM840 130h1v26h-1zM841 127h1v29h-1zM842 129h1v24h-1zM843 130h1v27h-1zM844 129h1v26h-1zM845 125h1v34h-1zM846 127h1v30h-1zM847 123h1v40h-1zM848 122h1v42h-1zM849 119h1v44h-1zM850 115h1v53h-1zM851 115h1v54h-1zM852 114h1v57h-1zM853 112h1v61h-1zM854 110h1v66h-1zM855 108h1v69h-1zM856 111h1v64h-1zM857 113h1v57h-1zM858 119h1v45h-1zM859 124h1v39h-1zM860 124h1v38h-1zM861 126h1v35h-1zM862 128h1v33h-1zM863 125h1v37h-1zM864 127h1v30h-1zM865 128h1v30h-1zM866 130h1v28h-1zM867 132h1v22h-1zM868 134h1v18h-1zM869 134h1v15h-1zM870 133h1v18h-1zM871 133h1v16h-1zM872 135h1v17h-1zM873 132h1v19h-1zM874 132h1v18h-1zM875 133h1v17h-1zM876 134h1v16h-1zM877 135h1v14h-1zM878 136h1v12h-1zM879 138h1v11h-1zM880 139h1v7h-1zM881 140h1v5h-1zM882 140h1v7h-1zM883 138h1v9h-1zM884 137h1v12h-1zM885 133h1v16h-1zM886 133h1v18h-1zM887 129h1v22h-1zM888 126h1v30h-1zM889 122h1v42h-1zM890 120h1v49h-1zM891 110h1v64h-1zM892 106h1v74h-1zM893 102h1v81h-1zM894 100h1v84h-1zM895 101h1v84h-1zM896 100h1v86h-1zM897 98h1v89h-1zM898 97h1v90h-1zM899 96h1v94h-1zM900 95h1v96h-1zM901 95h1v96h-1zM902 96h1v94h-1zM903 95h1v95h-1zM904 95h1v95h-1zM905 95h1v95h-1zM906 95h1v95h-1zM907 95h1v95h-1zM908 95h1v95h-1zM909 95h1v95h-1zM910 95h1v95h-1zM911 95h1v95h-1zM912 95h1v94h-1zM913 94h1v95h-1zM914 94h1v95h-1zM915 94h1v95h-1zM916 95h1v95h-1zM917 95h1v96h-1zM918 94h1v98h-1zM919 93h1v100h-1zM920 91h1v104h-1zM921 90h1v106h-1zM922 89h1v108h-1zM923 88h1v108h-1zM924 88h1v108h-1zM925 89h1v107h-1zM926 90h1v105h-1zM927 90h1v105h-1zM928 91h1v104h-1zM929 90h1v105h-1zM930 89h1v107h-1zM931 88h1v108h-1zM932 87h1v110h-1zM933 86h1v113h-1zM934 86h1v114h-1zM935 86h1v113h-1zM936 86h1v114h-1zM937 85h1v114h-1zM938 84h1v116h-1zM939 83h1v118h-1zM940 82h1v122h-1zM941 81h1v124h-1zM942 79h1v127h-1zM943 78h1v129h-1zM944 77h1v131h-1zM945 77h1v131h-1zM946 76h1v133h-1zM947 75h1v135h-1zM948 74h1v137h-1zM949 73h1v139h-1zM950 71h1v141h-1zM951 71h1v142h-1zM952 70h1v144h-1zM953 70h1v144h-1zM954 70h1v144h-1zM955 69h1v145h-1zM956 69h1v145h-1zM957 69h1v145h-1zM958 70h1v143h-1zM959 71h1v141h-1zM960 73h1v139h-1zM961 74h1v136h-1zM962 76h1v132h-1zM963 80h1v124h-1zM964 83h1v119h-1zM965 86h1v113h-1zM966 88h1v109h-1zM967 90h1v106h-1zM968 92h1v104h-1zM969 91h1v105h-1zM970 89h1v108h-1zM971 88h1v109h-1zM972 87h1v112h-1zM973 86h1v114h-1zM974 85h1v115h-1zM975 85h1v115h-1zM976 84h1v115h-1zM977 84h1v115h-1zM978 84h1v115h-1zM979 84h1v115h-1zM980 84h1v115h-1zM981 85h1v116h-1zM982 85h1v116h-1zM983 84h1v117h-1zM984 84h1v117h-1zM985 84h1v115h-1zM986 84h1v115h-1zM987 82h1v119h-1zM988 82h1v119h-1zM989 82h1v119h-1zM990 84h1v118h-1zM991 84h1v118h-1zM992 84h1v117h-1zM993 84h1v117h-1zM994 83h1v117h-1zM995 84h1v116h-1zM996 84h1v115h-1zM997 87h1v113h-1zM998 87h1v113h-1zM999 87h1v112h-1zM1000 87h1v112h-1zM1001 86h1v114h-1zM1002 86h1v114h-1zM1003 87h1v112h-1zM1004 87h1v111h-1zM1005 88h1v110h-1zM1006 88h1v109h-1zM1007 89h1v108h-1zM1008 89h1v107h-1zM1009 89h1v107h-1zM1010 91h1v104h-1zM1011 91h1v104h-1zM1012 90h1v105h-1zM1013 90h1v104h-1zM1014 91h1v102h-1zM1015 93h1v99h-1zM1016 93h1v98h-1zM1017 92h1v98h-1zM1018 93h1v97h-1zM1019 93h1v96h-1zM1020 94h1v95h-1zM1021 97h1v91h-1zM1022 97h1v91h-1zM1023 96h1v93h-1zM1024 97h1v91h-1zM1025 98h1v90h-1zM1026 99h1v88h-1zM1027 99h1v88h-1zM1028 100h1v86h-1zM1029 101h1v84h-1zM1030 104h1v80h-1zM1031 105h1v78h-1zM1032 106h1v76h-1zM1033 105h1v75h-1zM1034 105h1v74h-1zM1035 106h1v72h-1zM1036 106h1v72h-1zM1037 107h1v70h-1zM1038 110h1v66h-1zM1039 110h1v65h-1zM1040 109h1v67h-1zM1041 110h1v65h-1zM1042 113h1v61h-1zM1043 114h1v59h-1zM1044 115h1v58h-1zM1045 115h1v57h-1zM1046 116h1v55h-1zM1047 115h1v55h-1zM1048 116h1v53h-1zM1049 118h1v49h-1zM1050 119h1v48h-1zM1051 119h1v48h-1zM1052 119h1v49h-1zM1053 120h1v47h-1zM1054 120h1v47h-1zM1055 119h1v49h-1zM1056 119h1v49h-1zM1057 121h1v46h-1zM1058 121h1v46h-1zM1059 120h1v46h-1zM1060 120h1v45h-1zM1061 121h1v44h-1zM1062 122h1v43h-1zM1063 122h1v43h-1zM1064 122h1v43h-1zM1065 122h1v42h-1zM1066 122h1v42h-1zM1067 122h1v43h-1zM1068 122h1v43h-1zM1069 122h1v43h-1zM1070 123h1v42h-1zM1071 123h1v41h-1zM1072 122h1v41h-1zM1073 122h1v41h-1zM1074 123h1v42h-1zM1075 123h1v42h-1zM1076 123h1v42h-1zM1077 122h1v41h-1zM1078 123h1v40h-1zM1079 123h1v39h-1zM1080 123h1v39h-1zM1081 123h1v39h-1zM1082 123h1v40h-1zM1083 124h1v38h-1zM1084 124h1v38h-1zM1085 124h1v38h-1zM1086 125h1v37h-1zM1087 126h1v35h-1zM1088 126h1v34h-1zM1089 126h1v34h-1zM1090 125h1v37h-1zM1091 125h1v37h-1zM1092 104h1v65h-1zM1093 125h1v35h-1zM1094 126h1v34h-1zM1095 140h1v6h-1zM1096 141h1v4h-1zM1097 142h1v2h-1z" fill="#fff"/></svg><svg x="286" y="308" width="362" height="172" viewBox="286 308 362 172" overflow="hidden"><path d="M286 410h1v2h-1zM287 410h1v3h-1zM288 410h1v2h-1zM289 410h1v3h-1zM290 410h1v2h-1zM291 410h1v2h-1zM292 410h1v3h-1zM293 410h1v2h-1zM294 410h1v3h-1zM295 410h1v2h-1zM296 410h1v3h-1zM297 410h1v3h-1zM298 410h1v2h-1zM299 410h1v2h-1zM300 410h1v3h-1zM301 410h1v2h-1zM302 410h1v2h-1zM303 410h1v2h-1zM304 410h1v2h-1zM305 410h1v2h-1zM306 410h1v2h-1zM307 410h1v3h-1zM308 410h1v2h-1zM309 410h1v2h-1zM310 410h1v3h-1zM311 410h1v3h-1zM312 410h1v2h-1zM313 410h1v2h-1zM314 410h1v3h-1zM315 410h1v2h-1zM316 410h1v2h-1zM317 410h1v2h-1zM318 410h1v2h-1zM319 410h1v3h-1zM320 411h1v3h-1zM321 411h1v3h-1zM322 411h1v2h-1zM323 409h1v2h-1zM324 409h1v2h-1zM325 409h1v2h-1zM326 410h1v2h-1zM327 411h1v3h-1zM328 411h1v2h-1zM329 410h1v2h-1zM330 409h1v3h-1zM331 409h1v2h-1zM332 409h1v2h-1zM333 410h1v2h-1zM334 411h1v2h-1zM335 411h1v3h-1zM336 410h1v2h-1zM337 410h1v3h-1zM338 410h1v2h-1zM339 410h1v2h-1zM340 410h1v3h-1zM341 410h1v2h-1zM342 410h1v3h-1zM343 410h1v2h-1zM344 410h1v2h-1zM345 410h1v2h-1zM346 410h1v2h-1zM347 410h1v2h-1zM348 410h1v2h-1zM349 410h1v2h-1zM350 410h1v2h-1zM351 410h1v2h-1zM352 410h1v2h-1zM353 410h1v2h-1zM354 410h1v2h-1zM355 410h1v2h-1zM356 410h1v3h-1zM357 410h1v2h-1zM358 410h1v2h-1zM359 410h1v2h-1zM360 410h1v2h-1zM361 410h1v2h-1zM362 410h1v2h-1zM363 410h1v2h-1zM364 410h1v3h-1zM365 409h1v4h-1zM366 409h1v4h-1zM367 409h1v3h-1zM368 410h1v3h-1zM369 409h1v3h-1zM370 410h1v3h-1zM371 410h1v2h-1zM372 409h1v3h-1zM373 410h1v3h-1zM374 410h1v2h-1zM375 409h1v4h-1zM376 409h1v4h-1zM377 410h1v3h-1zM378 409h1v4h-1zM379 410h1v2h-1zM380 410h1v2h-1zM381 410h1v2h-1zM382 410h1v2h-1zM383 410h1v2h-1zM384 410h1v2h-1zM385 410h1v2h-1zM386 410h1v2h-1zM387 410h1v3h-1zM388 410h1v2h-1zM389 410h1v2h-1zM390 410h1v2h-1zM391 410h1v2h-1zM392 410h1v2h-1zM393 410h1v2h-1zM394 410h1v3h-1zM395 410h1v2h-1zM396 410h1v3h-1zM397 410h1v3h-1zM398 410h1v3h-1zM399 410h1v3h-1zM400 410h1v2h-1zM401 410h1v3h-1zM402 410h1v3h-1zM403 410h1v3h-1zM404 410h1v3h-1zM405 410h1v2h-1zM406 410h1v3h-1zM407 410h1v2h-1zM408 410h1v2h-1zM409 410h1v3h-1zM410 410h1v2h-1zM411 410h1v2h-1zM412 410h1v2h-1zM413 410h1v3h-1zM414 410h1v2h-1zM415 409h1v2h-1zM416 409h1v2h-1zM417 410h1v2h-1zM418 411h1v3h-1zM419 411h1v3h-1zM420 410h1v2h-1zM421 409h1v3h-1zM422 409h1v2h-1zM423 409h1v3h-1zM424 410h1v3h-1zM425 411h1v2h-1zM426 411h1v2h-1zM427 410h1v3h-1zM428 409h1v2h-1zM429 409h1v3h-1zM430 409h1v2h-1zM431 410h1v2h-1zM432 411h1v2h-1zM433 411h1v2h-1zM434 410h1v3h-1zM435 409h1v2h-1zM436 409h1v3h-1zM437 409h1v2h-1zM438 410h1v2h-1zM439 411h1v2h-1zM440 411h1v2h-1zM441 410h1v3h-1zM442 409h1v2h-1zM443 409h1v2h-1zM444 409h1v2h-1zM445 410h1v2h-1zM446 411h1v2h-1zM447 411h1v2h-1zM448 410h1v3h-1zM449 409h1v2h-1zM450 409h1v2h-1zM451 409h1v3h-1zM452 410h1v3h-1zM453 411h1v3h-1zM454 411h1v3h-1zM455 410h1v2h-1zM456 409h1v2h-1zM457 409h1v2h-1zM458 409h1v2h-1zM459 410h1v2h-1zM460 411h1v2h-1zM461 411h1v2h-1zM462 410h1v3h-1zM463 409h1v3h-1zM464 409h1v3h-1zM465 409h1v3h-1zM466 410h1v2h-1zM467 410h1v2h-1zM468 410h1v2h-1zM469 410h1v2h-1zM470 410h1v2h-1zM471 410h1v2h-1zM472 410h1v3h-1zM473 410h1v2h-1zM474 410h1v2h-1zM475 410h1v2h-1zM476 410h1v2h-1zM477 410h1v2h-1zM478 410h1v3h-1zM479 410h1v2h-1zM480 410h1v2h-1zM481 410h1v2h-1zM482 410h1v2h-1zM483 410h1v2h-1zM484 410h1v2h-1zM485 410h1v2h-1zM486 410h1v2h-1zM487 410h1v3h-1zM488 410h1v3h-1zM489 410h1v3h-1zM490 410h1v2h-1zM491 410h1v2h-1zM492 410h1v3h-1zM493 410h1v2h-1zM494 410h1v2h-1zM495 410h1v2h-1zM496 410h1v2h-1zM497 410h1v2h-1zM498 410h1v3h-1zM499 410h1v3h-1zM500 410h1v2h-1zM501 410h1v2h-1zM502 410h1v2h-1zM503 410h1v2h-1zM504 410h1v2h-1zM505 410h1v2h-1zM506 410h1v2h-1zM507 410h1v3h-1zM508 410h1v2h-1zM509 410h1v2h-1zM510 410h1v2h-1zM511 410h1v2h-1zM512 410h1v2h-1zM513 410h1v2h-1zM514 410h1v3h-1zM515 410h1v2h-1zM516 410h1v2h-1zM517 410h1v2h-1zM518 410h1v2h-1zM519 410h1v2h-1zM520 410h1v2h-1zM521 410h1v2h-1zM522 410h1v2h-1zM523 410h1v2h-1zM524 410h1v2h-1zM525 410h1v3h-1zM526 410h1v2h-1zM527 410h1v3h-1zM528 410h1v3h-1zM529 410h1v2h-1zM530 410h1v3h-1zM531 410h1v2h-1zM532 410h1v2h-1zM533 410h1v2h-1zM534 410h1v2h-1zM535 410h1v2h-1zM536 410h1v2h-1zM537 410h1v2h-1zM538 410h1v3h-1zM539 410h1v2h-1zM540 410h1v2h-1zM541 410h1v2h-1zM542 410h1v2h-1zM543 410h1v2h-1zM544 410h1v2h-1zM545 410h1v2h-1zM546 410h1v2h-1zM547 410h1v2h-1zM548 410h1v2h-1zM549 410h1v2h-1zM550 410h1v2h-1zM551 410h1v2h-1zM552 410h1v2h-1zM553 410h1v2h-1zM554 410h1v2h-1zM555 410h1v2h-1zM556 410h1v2h-1zM557 410h1v2h-1zM558 410h1v2h-1zM559 410h1v2h-1zM560 410h1v2h-1zM561 410h1v2h-1zM562 410h1v2h-1zM563 410h1v3h-1zM564 410h1v3h-1zM565 410h1v2h-1zM566 410h1v3h-1zM567 410h1v2h-1zM568 410h1v3h-1zM569 410h1v2h-1zM570 410h1v2h-1zM571 410h1v2h-1zM572 410h1v3h-1zM573 410h1v2h-1zM574 410h1v2h-1zM575 410h1v3h-1zM576 410h1v2h-1zM577 410h1v2h-1zM578 410h1v3h-1zM579 410h1v2h-1zM580 410h1v2h-1zM581 410h1v2h-1zM582 410h1v2h-1zM583 410h1v2h-1zM584 410h1v3h-1zM585 410h1v2h-1zM586 410h1v2h-1zM587 410h1v2h-1zM588 410h1v3h-1zM589 410h1v2h-1zM590 410h1v2h-1zM591 410h1v3h-1zM592 410h1v2h-1zM593 410h1v2h-1zM594 410h1v3h-1zM595 410h1v2h-1zM596 410h1v2h-1zM597 410h1v2h-1zM598 410h1v3h-1zM599 410h1v2h-1zM600 410h1v2h-1zM601 410h1v2h-1zM602 410h1v3h-1zM603 410h1v2h-1zM604 410h1v3h-1zM605 410h1v2h-1zM606 409h1v4h-1zM607 409h1v3h-1zM608 410h1v3h-1zM609 409h1v3h-1zM610 410h1v2h-1zM611 409h1v4h-1zM612 410h1v2h-1zM613 409h1v3h-1zM614 410h1v2h-1zM615 409h1v3h-1zM616 409h1v3h-1zM617 409h1v3h-1zM618 410h1v2h-1zM619 409h1v4h-1zM620 410h1v3h-1zM621 409h1v4h-1zM622 409h1v4h-1zM623 409h1v3h-1zM624 410h1v3h-1zM625 410h1v3h-1zM626 409h1v4h-1zM627 409h1v4h-1zM628 410h1v2h-1zM629 409h1v3h-1zM630 410h1v3h-1zM631 410h1v2h-1zM632 409h1v3h-1zM633 409h1v3h-1zM634 410h1v2h-1zM635 409h1v3h-1z" fill="#fff"/><polygon points="354,410 356,405 357,409 359,407 361,409 365,409 365,413 361,413 359,415 357,412 356,416 354,412" fill="#fff"/><rect x="564" y="323" width="1" height="150" fill="#fff"/><path d="M563 398h1v45h-1zM564 366h1v77h-1zM565 366h1v77h-1zM566 366h1v77h-1zM567 371h1v74h-1zM568 376h1v70h-1zM569 375h1v72h-1zM570 374h1v72h-1zM571 374h1v73h-1zM572 375h1v70h-1zM573 375h1v70h-1zM574 375h1v72h-1zM575 375h1v71h-1zM576 375h1v71h-1zM577 375h1v72h-1zM578 375h1v71h-1zM579 376h1v71h-1zM580 375h1v70h-1zM581 375h1v71h-1zM582 375h1v71h-1zM583 376h1v70h-1zM584 376h1v70h-1zM585 375h1v72h-1zM586 374h1v73h-1zM587 375h1v70h-1zM588 375h1v70h-1zM589 375h1v70h-1zM590 376h1v70h-1zM591 375h1v71h-1zM592 375h1v71h-1zM593 375h1v71h-1zM594 375h1v72h-1zM595 375h1v71h-1zM596 375h1v71h-1zM597 375h1v72h-1zM598 375h1v71h-1zM599 374h1v73h-1zM600 375h1v71h-1zM601 374h1v72h-1zM602 381h1v66h-1zM603 379h1v67h-1zM604 386h1v58h-1zM605 386h1v58h-1z" fill="#fff"/><rect x="604" y="440" width="1" height="26" fill="#fff"/><rect x="605" y="400" width="1" height="20" fill="#fff"/><rect x="635" y="373" width="1" height="77" fill="#fff"/><rect x="634" y="400" width="1" height="22" fill="#fff"/></svg><text x="26" y="42" font-size="12" font-weight="normal" fill="#000" text-anchor="start"  >Stimulus</text><rect x="24" y="47" width="177" height="131" fill="#000" /><rect x="25" y="48" width="175" height="129" fill="#b4b4b4" /><rect x="25" y="48" width="175" height="1" fill="#dedede" /><rect x="25" y="49" width="174" height="1" fill="#cbcbcb" /><rect x="25" y="48" width="1" height="129" fill="#dedede" /><rect x="26" y="49" width="1" height="127" fill="#cbcbcb" /><rect x="198" y="49" width="1" height="127" fill="#7a7a7a" /><rect x="199" y="48" width="1" height="129" fill="#5a5a5a" /><rect x="26" y="175" width="173" height="1" fill="#7a7a7a" /><rect x="26" y="176" width="174" height="1" fill="#5a5a5a" /><text x="30" y="73.5" font-size="12" font-weight="bold" fill="#000" text-anchor="start"  >t0</text><rect x="29" y="78" width="92" height="31" fill="#b4b4b4" /><rect x="29" y="78" width="92" height="1" fill="#707070" /><rect x="29" y="78" width="1" height="31" fill="#707070" /><rect x="29" y="108" width="92" height="1" fill="#dcdcdc" /><rect x="120" y="78" width="1" height="31" fill="#dcdcdc" /><rect x="30" y="80" width="7" height="14" fill="#d0d0d0" /><rect x="30" y="80" width="1" height="14" fill="#ececec" /><rect x="36" y="80" width="1" height="14" fill="#7a7a7a" /><rect x="30" y="93" width="7" height="1" fill="#6a6a6a" /><polygon points="30.7,88.7 33.5,84.5 36.3,88.7" fill="#000" shape-rendering="auto"/><rect x="30" y="94" width="7" height="14" fill="#d0d0d0" /><rect x="30" y="94" width="1" height="14" fill="#ececec" /><rect x="36" y="94" width="1" height="14" fill="#7a7a7a" /><rect x="30" y="107" width="7" height="1" fill="#6a6a6a" /><polygon points="30.7,98.3 33.5,102.5 36.3,98.3" fill="#000" shape-rendering="auto"/><text x="39.5" y="90.5" font-size="12" font-weight="normal" fill="#000" text-anchor="start" textLength="63.70" lengthAdjust="spacingAndGlyphs" >00:00:00 PM</text><text x="39.5" y="105.5" font-size="12" font-weight="normal" fill="#000" text-anchor="start"  >MM/DD/YYYY</text><text x="30" y="125.5" font-size="12" font-weight="bold" fill="#000" text-anchor="start"  >dt</text><rect x="29" y="130" width="92" height="19" fill="#b4b4b4" /><rect x="29" y="130" width="92" height="1" fill="#707070" /><rect x="29" y="130" width="1" height="19" fill="#707070" /><rect x="29" y="148" width="92" height="1" fill="#dcdcdc" /><rect x="120" y="130" width="1" height="19" fill="#dcdcdc" /><rect x="30" y="131" width="7" height="8" fill="#d0d0d0" /><rect x="30" y="131" width="1" height="8" fill="#ececec" /><rect x="36" y="131" width="1" height="8" fill="#7a7a7a" /><rect x="30" y="138" width="7" height="1" fill="#6a6a6a" /><polygon points="30.7,136.7 33.5,132.5 36.3,136.7" fill="#000" shape-rendering="auto"/><rect x="30" y="140" width="7" height="8" fill="#d0d0d0" /><rect x="30" y="140" width="1" height="8" fill="#ececec" /><rect x="36" y="140" width="1" height="8" fill="#7a7a7a" /><rect x="30" y="147" width="7" height="1" fill="#6a6a6a" /><polygon points="30.7,141.3 33.5,145.5 36.3,141.3" fill="#000" shape-rendering="auto"/><text x="38.5" y="142.8" font-size="12" font-weight="normal" fill="#000" text-anchor="start" textLength="44.98" lengthAdjust="spacingAndGlyphs" >0.000021</text><text x="127" y="66.3" font-size="12" font-weight="bold" fill="#000" text-anchor="start"  >Y</text><rect x="138" y="52" width="49" height="21" fill="#b4b4b4" /><rect x="138" y="52" width="49" height="1" fill="#707070" /><rect x="138" y="52" width="1" height="21" fill="#707070" /><rect x="138" y="72" width="49" height="1" fill="#dcdcdc" /><rect x="186" y="52" width="1" height="21" fill="#dcdcdc" /><rect x="141" y="54" width="7" height="8" fill="#d0d0d0" /><rect x="141" y="54" width="1" height="8" fill="#ececec" /><rect x="147" y="54" width="1" height="8" fill="#7a7a7a" /><rect x="141" y="61" width="7" height="1" fill="#6a6a6a" /><polygon points="141.7,59.7 144.5,55.5 147.3,59.7" fill="#000" shape-rendering="auto"/><rect x="141" y="63" width="7" height="8" fill="#d0d0d0" /><rect x="141" y="63" width="1" height="8" fill="#ececec" /><rect x="147" y="63" width="1" height="8" fill="#7a7a7a" /><rect x="141" y="70" width="7" height="1" fill="#6a6a6a" /><polygon points="141.7,64.3 144.5,68.5 147.3,64.3" fill="#000" shape-rendering="auto"/><text x="150" y="66.5" font-size="12" font-weight="normal" fill="#000" text-anchor="start" textLength="5.95" lengthAdjust="spacingAndGlyphs" >0</text><rect x="126" y="72" width="1" height="101" fill="#707070" /><rect x="126" y="72" width="12" height="1" fill="#707070" /><rect x="187" y="72" width="8" height="1" fill="#707070" /><rect x="195" y="72" width="1" height="101" fill="#d8d8d8" /><rect x="126" y="172" width="70" height="1" fill="#d8d8d8" /><rect x="129" y="75" width="64" height="19" fill="#b4b4b4" /><rect x="129" y="75" width="64" height="1" fill="#707070" /><rect x="129" y="75" width="1" height="19" fill="#707070" /><rect x="129" y="93" width="64" height="1" fill="#dcdcdc" /><rect x="192" y="75" width="1" height="19" fill="#dcdcdc" /><rect x="130" y="76" width="7" height="8" fill="#d0d0d0" /><rect x="130" y="76" width="1" height="8" fill="#ececec" /><rect x="136" y="76" width="1" height="8" fill="#7a7a7a" /><rect x="130" y="83" width="7" height="1" fill="#6a6a6a" /><polygon points="130.7,81.7 133.5,77.5 136.3,81.7" fill="#000" shape-rendering="auto"/><rect x="130" y="85" width="7" height="8" fill="#d0d0d0" /><rect x="130" y="85" width="1" height="8" fill="#ececec" /><rect x="136" y="85" width="1" height="8" fill="#7a7a7a" /><rect x="130" y="92" width="7" height="1" fill="#6a6a6a" /><polygon points="130.7,86.3 133.5,90.5 136.3,86.3" fill="#000" shape-rendering="auto"/><text x="139" y="88.5" font-size="12" font-weight="normal" fill="#000" text-anchor="start" textLength="5.95" lengthAdjust="spacingAndGlyphs" >0</text><rect x="129" y="94" width="64" height="19" fill="#b4b4b4" /><rect x="129" y="94" width="64" height="1" fill="#707070" /><rect x="129" y="94" width="1" height="19" fill="#707070" /><rect x="129" y="112" width="64" height="1" fill="#dcdcdc" /><rect x="192" y="94" width="1" height="19" fill="#dcdcdc" /><rect x="130" y="95" width="7" height="8" fill="#d0d0d0" /><rect x="130" y="95" width="1" height="8" fill="#ececec" /><rect x="136" y="95" width="1" height="8" fill="#7a7a7a" /><rect x="130" y="102" width="7" height="1" fill="#6a6a6a" /><polygon points="130.7,100.7 133.5,96.5 136.3,100.7" fill="#000" shape-rendering="auto"/><rect x="130" y="104" width="7" height="8" fill="#d0d0d0" /><rect x="130" y="104" width="1" height="8" fill="#ececec" /><rect x="136" y="104" width="1" height="8" fill="#7a7a7a" /><rect x="130" y="111" width="7" height="1" fill="#6a6a6a" /><polygon points="130.7,105.3 133.5,109.5 136.3,105.3" fill="#000" shape-rendering="auto"/><text x="139" y="107.5" font-size="12" font-weight="normal" fill="#000" text-anchor="start" textLength="44.98" lengthAdjust="spacingAndGlyphs" >0.026747</text><rect x="129" y="113" width="64" height="19" fill="#b4b4b4" /><rect x="129" y="113" width="64" height="1" fill="#707070" /><rect x="129" y="113" width="1" height="19" fill="#707070" /><rect x="129" y="131" width="64" height="1" fill="#dcdcdc" /><rect x="192" y="113" width="1" height="19" fill="#dcdcdc" /><rect x="130" y="114" width="7" height="8" fill="#d0d0d0" /><rect x="130" y="114" width="1" height="8" fill="#ececec" /><rect x="136" y="114" width="1" height="8" fill="#7a7a7a" /><rect x="130" y="121" width="7" height="1" fill="#6a6a6a" /><polygon points="130.7,119.7 133.5,115.5 136.3,119.7" fill="#000" shape-rendering="auto"/><rect x="130" y="123" width="7" height="8" fill="#d0d0d0" /><rect x="130" y="123" width="1" height="8" fill="#ececec" /><rect x="136" y="123" width="1" height="8" fill="#7a7a7a" /><rect x="130" y="130" width="7" height="1" fill="#6a6a6a" /><polygon points="130.7,124.3 133.5,128.5 136.3,124.3" fill="#000" shape-rendering="auto"/><text x="139" y="126.5" font-size="12" font-weight="normal" fill="#000" text-anchor="start" textLength="44.98" lengthAdjust="spacingAndGlyphs" >0.053036</text><rect x="129" y="132" width="64" height="19" fill="#b4b4b4" /><rect x="129" y="132" width="64" height="1" fill="#707070" /><rect x="129" y="132" width="1" height="19" fill="#707070" /><rect x="129" y="150" width="64" height="1" fill="#dcdcdc" /><rect x="192" y="132" width="1" height="19" fill="#dcdcdc" /><rect x="130" y="133" width="7" height="8" fill="#d0d0d0" /><rect x="130" y="133" width="1" height="8" fill="#ececec" /><rect x="136" y="133" width="1" height="8" fill="#7a7a7a" /><rect x="130" y="140" width="7" height="1" fill="#6a6a6a" /><polygon points="130.7,138.7 133.5,134.5 136.3,138.7" fill="#000" shape-rendering="auto"/><rect x="130" y="142" width="7" height="8" fill="#d0d0d0" /><rect x="130" y="142" width="1" height="8" fill="#ececec" /><rect x="136" y="142" width="1" height="8" fill="#7a7a7a" /><rect x="130" y="149" width="7" height="1" fill="#6a6a6a" /><polygon points="130.7,143.3 133.5,147.5 136.3,143.3" fill="#000" shape-rendering="auto"/><text x="139" y="145.5" font-size="12" font-weight="normal" fill="#000" text-anchor="start" textLength="44.98" lengthAdjust="spacingAndGlyphs" >0.078418</text><rect x="129" y="151" width="64" height="19" fill="#b4b4b4" /><rect x="129" y="151" width="64" height="1" fill="#707070" /><rect x="129" y="151" width="1" height="19" fill="#707070" /><rect x="129" y="169" width="64" height="1" fill="#dcdcdc" /><rect x="192" y="151" width="1" height="19" fill="#dcdcdc" /><rect x="130" y="152" width="7" height="8" fill="#d0d0d0" /><rect x="130" y="152" width="1" height="8" fill="#ececec" /><rect x="136" y="152" width="1" height="8" fill="#7a7a7a" /><rect x="130" y="159" width="7" height="1" fill="#6a6a6a" /><polygon points="130.7,157.7 133.5,153.5 136.3,157.7" fill="#000" shape-rendering="auto"/><rect x="130" y="161" width="7" height="8" fill="#d0d0d0" /><rect x="130" y="161" width="1" height="8" fill="#ececec" /><rect x="136" y="161" width="1" height="8" fill="#7a7a7a" /><rect x="130" y="168" width="7" height="1" fill="#6a6a6a" /><polygon points="130.7,162.3 133.5,166.5 136.3,162.3" fill="#000" shape-rendering="auto"/><text x="139" y="164.5" font-size="12" font-weight="normal" fill="#000" text-anchor="start" textLength="44.98" lengthAdjust="spacingAndGlyphs" >0.102458</text><text x="1142" y="137" font-size="12" font-weight="normal" fill="#000" text-anchor="start"  >chopped portion</text><rect x="1140" y="142" width="177" height="131" fill="#000" /><rect x="1141" y="143" width="175" height="129" fill="#b4b4b4" /><rect x="1141" y="143" width="175" height="1" fill="#dedede" /><rect x="1141" y="144" width="174" height="1" fill="#cbcbcb" /><rect x="1141" y="143" width="1" height="129" fill="#dedede" /><rect x="1142" y="144" width="1" height="127" fill="#cbcbcb" /><rect x="1314" y="144" width="1" height="127" fill="#7a7a7a" /><rect x="1315" y="143" width="1" height="129" fill="#5a5a5a" /><rect x="1142" y="270" width="173" height="1" fill="#7a7a7a" /><rect x="1142" y="271" width="174" height="1" fill="#5a5a5a" /><text x="1146" y="164.5" font-size="12" font-weight="bold" fill="#000" text-anchor="start"  >t0</text><rect x="1145" y="169" width="91" height="31" fill="#b4b4b4" /><rect x="1145" y="169" width="91" height="1" fill="#707070" /><rect x="1145" y="169" width="1" height="31" fill="#707070" /><rect x="1145" y="199" width="91" height="1" fill="#dcdcdc" /><rect x="1235" y="169" width="1" height="31" fill="#dcdcdc" /><text x="1155.5" y="181.7" font-size="12" font-weight="normal" fill="#000" text-anchor="start" textLength="63.70" lengthAdjust="spacingAndGlyphs" >00:00:00 PM</text><text x="1155.5" y="197" font-size="12" font-weight="normal" fill="#000" text-anchor="start"  >MM/DD/YYYY</text><text x="1146" y="216.5" font-size="12" font-weight="bold" fill="#000" text-anchor="start"  >dt</text><rect x="1145" y="221" width="91" height="19" fill="#b4b4b4" /><rect x="1145" y="221" width="91" height="1" fill="#707070" /><rect x="1145" y="221" width="1" height="19" fill="#707070" /><rect x="1145" y="239" width="91" height="1" fill="#dcdcdc" /><rect x="1235" y="221" width="1" height="19" fill="#dcdcdc" /><text x="1154.2" y="235.6" font-size="12" font-weight="normal" fill="#000" text-anchor="start" textLength="44.98" lengthAdjust="spacingAndGlyphs" >0.000021</text><text x="1251" y="161.3" font-size="12" font-weight="bold" fill="#000" text-anchor="start"  >Y</text><rect x="1262" y="147" width="49" height="21" fill="#b4b4b4" /><rect x="1262" y="147" width="49" height="1" fill="#707070" /><rect x="1262" y="147" width="1" height="21" fill="#707070" /><rect x="1262" y="167" width="49" height="1" fill="#dcdcdc" /><rect x="1310" y="147" width="1" height="21" fill="#dcdcdc" /><rect x="1265" y="149" width="7" height="8" fill="#d0d0d0" /><rect x="1265" y="149" width="1" height="8" fill="#ececec" /><rect x="1271" y="149" width="1" height="8" fill="#7a7a7a" /><rect x="1265" y="156" width="7" height="1" fill="#6a6a6a" /><polygon points="1265.7,154.7 1268.5,150.5 1271.3,154.7" fill="#000" shape-rendering="auto"/><rect x="1265" y="158" width="7" height="8" fill="#d0d0d0" /><rect x="1265" y="158" width="1" height="8" fill="#ececec" /><rect x="1271" y="158" width="1" height="8" fill="#7a7a7a" /><rect x="1265" y="165" width="7" height="1" fill="#6a6a6a" /><polygon points="1265.7,159.3 1268.5,163.5 1271.3,159.3" fill="#000" shape-rendering="auto"/><text x="1274" y="161.5" font-size="12" font-weight="normal" fill="#000" text-anchor="start" textLength="5.95" lengthAdjust="spacingAndGlyphs" >0</text><rect x="1250" y="167" width="1" height="101" fill="#707070" /><rect x="1250" y="167" width="12" height="1" fill="#707070" /><rect x="1311" y="167" width="1" height="1" fill="#707070" /><rect x="1312" y="167" width="1" height="101" fill="#d8d8d8" /><rect x="1250" y="267" width="63" height="1" fill="#d8d8d8" /><rect x="1253" y="170" width="57" height="19" fill="#b4b4b4" /><rect x="1253" y="170" width="57" height="1" fill="#707070" /><rect x="1253" y="170" width="1" height="19" fill="#707070" /><rect x="1253" y="188" width="57" height="1" fill="#dcdcdc" /><rect x="1309" y="170" width="1" height="19" fill="#dcdcdc" /><text x="1255" y="183.2" font-size="12" font-weight="normal" fill="#000" text-anchor="start" textLength="44.98" lengthAdjust="spacingAndGlyphs" >0.000214</text><rect x="1253" y="189" width="57" height="19" fill="#b4b4b4" /><rect x="1253" y="189" width="57" height="1" fill="#707070" /><rect x="1253" y="189" width="1" height="19" fill="#707070" /><rect x="1253" y="207" width="57" height="1" fill="#dcdcdc" /><rect x="1309" y="189" width="1" height="19" fill="#dcdcdc" /><text x="1255" y="202.2" font-size="12" font-weight="normal" fill="#000" text-anchor="start" textLength="44.98" lengthAdjust="spacingAndGlyphs" >0.000183</text><rect x="1253" y="208" width="57" height="19" fill="#b4b4b4" /><rect x="1253" y="208" width="57" height="1" fill="#707070" /><rect x="1253" y="208" width="1" height="19" fill="#707070" /><rect x="1253" y="226" width="57" height="1" fill="#dcdcdc" /><rect x="1309" y="208" width="1" height="19" fill="#dcdcdc" /><text x="1255" y="221.2" font-size="12" font-weight="normal" fill="#000" text-anchor="start" textLength="44.98" lengthAdjust="spacingAndGlyphs" >0.000549</text><rect x="1253" y="227" width="57" height="19" fill="#b4b4b4" /><rect x="1253" y="227" width="57" height="1" fill="#707070" /><rect x="1253" y="227" width="1" height="19" fill="#707070" /><rect x="1253" y="245" width="57" height="1" fill="#dcdcdc" /><rect x="1309" y="227" width="1" height="19" fill="#dcdcdc" /><text x="1255" y="240.2" font-size="12" font-weight="normal" fill="#000" text-anchor="start" textLength="44.98" lengthAdjust="spacingAndGlyphs" >0.000305</text><rect x="1253" y="246" width="57" height="19" fill="#b4b4b4" /><rect x="1253" y="246" width="57" height="1" fill="#707070" /><rect x="1253" y="246" width="1" height="19" fill="#707070" /><rect x="1253" y="264" width="57" height="1" fill="#dcdcdc" /><rect x="1309" y="246" width="1" height="19" fill="#dcdcdc" /><text x="1255" y="259.2" font-size="12" font-weight="normal" fill="#000" text-anchor="start" textLength="44.98" lengthAdjust="spacingAndGlyphs" >0.000366</text><text x="1142" y="294" font-size="12" font-weight="normal" fill="#000" text-anchor="start"  >Stimulus out</text><rect x="1140" y="299" width="177" height="131" fill="#000" /><rect x="1141" y="300" width="175" height="129" fill="#b4b4b4" /><rect x="1141" y="300" width="175" height="1" fill="#dedede" /><rect x="1141" y="301" width="174" height="1" fill="#cbcbcb" /><rect x="1141" y="300" width="1" height="129" fill="#dedede" /><rect x="1142" y="301" width="1" height="127" fill="#cbcbcb" /><rect x="1314" y="301" width="1" height="127" fill="#7a7a7a" /><rect x="1315" y="300" width="1" height="129" fill="#5a5a5a" /><rect x="1142" y="427" width="173" height="1" fill="#7a7a7a" /><rect x="1142" y="428" width="174" height="1" fill="#5a5a5a" /><text x="1146" y="321.5" font-size="12" font-weight="bold" fill="#000" text-anchor="start"  >t0</text><rect x="1145" y="326" width="91" height="31" fill="#b4b4b4" /><rect x="1145" y="326" width="91" height="1" fill="#707070" /><rect x="1145" y="326" width="1" height="31" fill="#707070" /><rect x="1145" y="356" width="91" height="1" fill="#dcdcdc" /><rect x="1235" y="326" width="1" height="31" fill="#dcdcdc" /><text x="1155.5" y="338.7" font-size="12" font-weight="normal" fill="#000" text-anchor="start" textLength="63.70" lengthAdjust="spacingAndGlyphs" >00:00:00 PM</text><text x="1155.5" y="354" font-size="12" font-weight="normal" fill="#000" text-anchor="start"  >MM/DD/YYYY</text><text x="1146" y="373.5" font-size="12" font-weight="bold" fill="#000" text-anchor="start"  >dt</text><rect x="1145" y="378" width="91" height="19" fill="#b4b4b4" /><rect x="1145" y="378" width="91" height="1" fill="#707070" /><rect x="1145" y="378" width="1" height="19" fill="#707070" /><rect x="1145" y="396" width="91" height="1" fill="#dcdcdc" /><rect x="1235" y="378" width="1" height="19" fill="#dcdcdc" /><text x="1154.2" y="392.6" font-size="12" font-weight="normal" fill="#000" text-anchor="start" textLength="44.98" lengthAdjust="spacingAndGlyphs" >0.000021</text><text x="1243" y="318.3" font-size="12" font-weight="bold" fill="#000" text-anchor="start"  >Y</text><rect x="1254" y="304" width="49" height="21" fill="#b4b4b4" /><rect x="1254" y="304" width="49" height="1" fill="#707070" /><rect x="1254" y="304" width="1" height="21" fill="#707070" /><rect x="1254" y="324" width="49" height="1" fill="#dcdcdc" /><rect x="1302" y="304" width="1" height="21" fill="#dcdcdc" /><rect x="1257" y="306" width="7" height="8" fill="#d0d0d0" /><rect x="1257" y="306" width="1" height="8" fill="#ececec" /><rect x="1263" y="306" width="1" height="8" fill="#7a7a7a" /><rect x="1257" y="313" width="7" height="1" fill="#6a6a6a" /><polygon points="1257.7,311.7 1260.5,307.5 1263.3,311.7" fill="#000" shape-rendering="auto"/><rect x="1257" y="315" width="7" height="8" fill="#d0d0d0" /><rect x="1257" y="315" width="1" height="8" fill="#ececec" /><rect x="1263" y="315" width="1" height="8" fill="#7a7a7a" /><rect x="1257" y="322" width="7" height="1" fill="#6a6a6a" /><polygon points="1257.7,316.3 1260.5,320.5 1263.3,316.3" fill="#000" shape-rendering="auto"/><text x="1266" y="318.5" font-size="12" font-weight="normal" fill="#000" text-anchor="start" textLength="5.95" lengthAdjust="spacingAndGlyphs" >0</text><rect x="1242" y="324" width="1" height="101" fill="#707070" /><rect x="1242" y="324" width="12" height="1" fill="#707070" /><rect x="1303" y="324" width="8" height="1" fill="#707070" /><rect x="1311" y="324" width="1" height="101" fill="#d8d8d8" /><rect x="1242" y="424" width="70" height="1" fill="#d8d8d8" /><rect x="1245" y="327" width="64" height="19" fill="#b4b4b4" /><rect x="1245" y="327" width="64" height="1" fill="#707070" /><rect x="1245" y="327" width="1" height="19" fill="#707070" /><rect x="1245" y="345" width="64" height="1" fill="#dcdcdc" /><rect x="1308" y="327" width="1" height="19" fill="#dcdcdc" /><text x="1255" y="340.2" font-size="12" font-weight="normal" fill="#000" text-anchor="start" textLength="5.95" lengthAdjust="spacingAndGlyphs" >0</text><rect x="1245" y="346" width="64" height="19" fill="#b4b4b4" /><rect x="1245" y="346" width="64" height="1" fill="#707070" /><rect x="1245" y="346" width="1" height="19" fill="#707070" /><rect x="1245" y="364" width="64" height="1" fill="#dcdcdc" /><rect x="1308" y="346" width="1" height="19" fill="#dcdcdc" /><text x="1255" y="359.2" font-size="12" font-weight="normal" fill="#000" text-anchor="start" textLength="44.98" lengthAdjust="spacingAndGlyphs" >0.042604</text><rect x="1245" y="365" width="64" height="19" fill="#b4b4b4" /><rect x="1245" y="365" width="64" height="1" fill="#707070" /><rect x="1245" y="365" width="1" height="19" fill="#707070" /><rect x="1245" y="383" width="64" height="1" fill="#dcdcdc" /><rect x="1308" y="365" width="1" height="19" fill="#dcdcdc" /><text x="1255" y="378.2" font-size="12" font-weight="normal" fill="#000" text-anchor="start" textLength="48.98" lengthAdjust="spacingAndGlyphs" >-0.083347</text><rect x="1245" y="384" width="64" height="19" fill="#b4b4b4" /><rect x="1245" y="384" width="64" height="1" fill="#707070" /><rect x="1245" y="384" width="1" height="19" fill="#707070" /><rect x="1245" y="402" width="64" height="1" fill="#dcdcdc" /><rect x="1308" y="384" width="1" height="19" fill="#dcdcdc" /><text x="1255" y="397.2" font-size="12" font-weight="normal" fill="#000" text-anchor="start" textLength="44.98" lengthAdjust="spacingAndGlyphs" >0.120446</text><rect x="1245" y="403" width="64" height="19" fill="#b4b4b4" /><rect x="1245" y="403" width="64" height="1" fill="#707070" /><rect x="1245" y="403" width="1" height="19" fill="#707070" /><rect x="1245" y="421" width="64" height="1" fill="#dcdcdc" /><rect x="1308" y="403" width="1" height="19" fill="#dcdcdc" /><text x="1255" y="416.2" font-size="12" font-weight="normal" fill="#000" text-anchor="start" textLength="48.98" lengthAdjust="spacingAndGlyphs" >-0.152282</text><text x="119.5" y="233" font-size="12" font-weight="normal" fill="#000" text-anchor="start"  >waveform in</text><polygon points="91,238 117,238 114,241 94,241" fill="#c4c4c4"/><polygon points="91,238 94,241 94,258 91,261" fill="#cacaca"/><polygon points="117,238 117,261 114,258 114,241" fill="#ececec"/><polygon points="91,261 94,258 114,258 117,261" fill="#e4e4e4"/><rect x="94" y="241" width="20" height="17" fill="#fbfbfb" /><ellipse cx="84.0" cy="248.0" rx="7.0" ry="13.0" fill="#7c7c7c" shape-rendering="auto"/><ellipse cx="83.5" cy="247.5" rx="6.1" ry="12.0" fill="#e6e6e6" shape-rendering="auto"/><ellipse cx="84.0" cy="248.0" rx="5.6" ry="11.4" fill="url(#g10)" shape-rendering="auto"/><rect x="78.0" y="246.5" width="12.0" height="1" fill="#8c8c8c" shape-rendering="auto"/><rect x="78.0" y="247.5" width="12.0" height="1" fill="#ececec" shape-rendering="auto"/><g shape-rendering="auto"><path d="M81.4,244.2 L86.6,244.2 L84.0,238.8" stroke="#f4f4f4" stroke-width="1" fill="none"/><path d="M81.4,244.2 L84.0,238.8" stroke="#303030" stroke-width="1.3" fill="none"/><path d="M86.6,250.3 L84.0,256.1" stroke="#f4f4f4" stroke-width="1" fill="none"/><path d="M86.6,250.3 L81.4,250.3 L84.0,256.1" stroke="#303030" stroke-width="1.2" fill="none"/></g><text x="96" y="253.5" font-size="12" font-weight="normal" fill="#000" text-anchor="start" textLength="5.95" lengthAdjust="spacingAndGlyphs" >0</text><polygon points="119,238 192,238 187,244 122,244" fill="#bdbdbd"/><polygon points="119,238 122,244 122,266 119,270" fill="#c4c4c4"/><polygon points="192,238 192,270 187,266 187,244" fill="#ececec"/><polygon points="119,270 122,266 187,266 192,270" fill="#e8e8e8"/><rect x="122" y="244" width="65" height="22" fill="#a9a9a9" /><polygon points="137,246 183,246 183,246 137,246" fill="#a0a0a0"/><polygon points="137,246 137,246 137,263 137,263" fill="#a0a0a0"/><polygon points="183,246 183,263 183,263 183,246" fill="#b0b0b0"/><polygon points="137,263 137,263 183,263 183,263" fill="#b0b0b0"/><polygon points="134,243 186,243 183,246 137,246" fill="#c4c4c4"/><polygon points="134,243 137,246 137,263 134,266" fill="#cacaca"/><polygon points="186,243 186,266 183,263 183,246" fill="#ececec"/><polygon points="134,266 137,263 183,263 186,266" fill="#e4e4e4"/><rect x="137" y="246" width="46" height="17" fill="#fbfbfb" /><ellipse cx="128.0" cy="253.5" rx="6.0" ry="12.5" fill="#7c7c7c" shape-rendering="auto"/><ellipse cx="127.5" cy="253.0" rx="5.1" ry="11.5" fill="#e6e6e6" shape-rendering="auto"/><ellipse cx="128.0" cy="253.5" rx="4.6" ry="10.9" fill="url(#g11)" shape-rendering="auto"/><rect x="123.0" y="252.0" width="10.0" height="1" fill="#8c8c8c" shape-rendering="auto"/><rect x="123.0" y="253.0" width="10.0" height="1" fill="#ececec" shape-rendering="auto"/><g shape-rendering="auto"><path d="M125.4,249.7 L130.6,249.7 L128.0,244.3" stroke="#f4f4f4" stroke-width="1" fill="none"/><path d="M125.4,249.7 L128.0,244.3" stroke="#303030" stroke-width="1.3" fill="none"/><path d="M130.6,255.8 L128.0,261.6" stroke="#f4f4f4" stroke-width="1" fill="none"/><path d="M130.6,255.8 L125.4,255.8 L128.0,261.6" stroke="#303030" stroke-width="1.2" fill="none"/></g><text x="139" y="258.5" font-size="12" font-weight="normal" fill="#000" text-anchor="start" textLength="44.98" lengthAdjust="spacingAndGlyphs" >0.000213</text><path d="M122,244 h65 v22 h-65 z M137,246 v17 h46 v-17 z" fill="#a9a9a9" fill-rule="evenodd"/><rect x="137" y="246" width="46" height="17" fill="#fbfbfb" /><svg x="137" y="246" width="44" height="17" overflow="hidden"><text x="2" y="12.5" font-size="12" textLength="44.98" lengthAdjust="spacingAndGlyphs">0.000213</text></svg><ellipse cx="128" cy="253.5" rx="6" ry="12.5" fill="#7c7c7c" shape-rendering="auto"/><ellipse cx="127.5" cy="253.0" rx="5.1" ry="11.5" fill="#e6e6e6" shape-rendering="auto"/><ellipse cx="128" cy="253.5" rx="4.6" ry="10.9" fill="url(#g12)" shape-rendering="auto"/><rect x="123" y="252.0" width="10" height="1" fill="#8c8c8c" shape-rendering="auto"/><rect x="123" y="253.0" width="10" height="1" fill="#ececec" shape-rendering="auto"/><g shape-rendering="auto"><path d="M125.4,249.7 L130.6,249.7 L128,244.3" stroke="#f4f4f4" stroke-width="1" fill="none"/><path d="M125.4,249.7 L128,244.3" stroke="#303030" stroke-width="1.3" fill="none"/><path d="M130.6,255.8 L128,261.6" stroke="#f4f4f4" stroke-width="1" fill="none"/><path d="M130.6,255.8 L125.4,255.8 L128,261.6" stroke="#303030" stroke-width="1.2" fill="none"/></g><text x="25.5" y="305" font-size="12" font-weight="normal" fill="#000" text-anchor="start"  >sampling rate</text><polygon points="25,310 77,310 74,313 28,313" fill="#c4c4c4"/><polygon points="25,310 28,313 28,330 25,333" fill="#cacaca"/><polygon points="77,310 77,333 74,330 74,313" fill="#ececec"/><polygon points="25,333 28,330 74,330 77,333" fill="#e4e4e4"/><rect x="28" y="313" width="46" height="17" fill="#fbfbfb" /><ellipse cx="19.0" cy="320.5" rx="6.0" ry="12.5" fill="#7c7c7c" shape-rendering="auto"/><ellipse cx="18.5" cy="320.0" rx="5.1" ry="11.5" fill="#e6e6e6" shape-rendering="auto"/><ellipse cx="19.0" cy="320.5" rx="4.6" ry="10.9" fill="url(#g13)" shape-rendering="auto"/><rect x="14.0" y="319.0" width="10.0" height="1" fill="#8c8c8c" shape-rendering="auto"/><rect x="14.0" y="320.0" width="10.0" height="1" fill="#ececec" shape-rendering="auto"/><g shape-rendering="auto"><path d="M16.4,316.7 L21.6,316.7 L19.0,311.3" stroke="#f4f4f4" stroke-width="1" fill="none"/><path d="M16.4,316.7 L19.0,311.3" stroke="#303030" stroke-width="1.3" fill="none"/><path d="M21.6,322.8 L19.0,328.6" stroke="#f4f4f4" stroke-width="1" fill="none"/><path d="M21.6,322.8 L16.4,322.8 L19.0,328.6" stroke="#303030" stroke-width="1.2" fill="none"/></g><text x="30" y="325.5" font-size="12" font-weight="normal" fill="#000" text-anchor="start" textLength="29.75" lengthAdjust="spacingAndGlyphs" >48000</text><text x="139.7" y="305" font-size="12" font-weight="normal" fill="#000" text-anchor="start" textLength="61.90" lengthAdjust="spacingAndGlyphs" >headLength</text><polygon points="139,310 191,310 188,313 142,313" fill="#c4c4c4"/><polygon points="139,310 142,313 142,330 139,333" fill="#cacaca"/><polygon points="191,310 191,333 188,330 188,313" fill="#ececec"/><polygon points="139,333 142,330 188,330 191,333" fill="#e4e4e4"/><rect x="142" y="313" width="46" height="17" fill="#fbfbfb" /><ellipse cx="133.0" cy="321.5" rx="6.0" ry="12.5" fill="#7c7c7c" shape-rendering="auto"/><ellipse cx="132.5" cy="321.0" rx="5.1" ry="11.5" fill="#e6e6e6" shape-rendering="auto"/><ellipse cx="133.0" cy="321.5" rx="4.6" ry="10.9" fill="url(#g14)" shape-rendering="auto"/><rect x="128.0" y="320.0" width="10.0" height="1" fill="#8c8c8c" shape-rendering="auto"/><rect x="128.0" y="321.0" width="10.0" height="1" fill="#ececec" shape-rendering="auto"/><g shape-rendering="auto"><path d="M130.4,317.7 L135.6,317.7 L133.0,312.3" stroke="#f4f4f4" stroke-width="1" fill="none"/><path d="M130.4,317.7 L133.0,312.3" stroke="#303030" stroke-width="1.3" fill="none"/><path d="M135.6,323.8 L133.0,329.6" stroke="#f4f4f4" stroke-width="1" fill="none"/><path d="M135.6,323.8 L130.4,323.8 L133.0,329.6" stroke="#303030" stroke-width="1.2" fill="none"/></g><text x="144" y="325.5" font-size="12" font-weight="normal" fill="#000" text-anchor="start" textLength="23.80" lengthAdjust="spacingAndGlyphs" >8800</text><text x="14" y="358.5" font-size="12" font-weight="normal" fill="#000" text-anchor="start"  >Make sure that &quot;sampling rate&quot; and</text><text x="14" y="373.5" font-size="12" font-weight="normal" fill="#000" text-anchor="start"  >&quot;headlength&quot; are the correct inputs.</text><text x="89.5" y="435.5" font-size="12" font-weight="normal" fill="#000" text-anchor="start"  >Method</text><rect x="88" y="442" width="116" height="23" fill="#a8a8a8" /><rect x="89" y="443" width="114" height="21" fill="#ffffff" /><rect x="185" y="444" width="17" height="19" fill="#999999" /><rect x="186" y="445" width="15" height="17" fill="#e6e6e6" /><path d="M189.5,451.5 L193.5,455.5 L197.5,451.5" stroke="#303030" stroke-width="1.2" fill="none" shape-rendering="auto"/><text x="92.7" y="457" font-size="12" font-weight="normal" fill="#000" text-anchor="start" textLength="29.30" lengthAdjust="spacingAndGlyphs" >NI-SV</text><text x="1141.5" y="28.6" font-size="12" font-weight="normal" fill="#000" text-anchor="start" textLength="114.00" lengthAdjust="spacingAndGlyphs" >Chopped Wavelength</text><polygon points="1141,34 1242,34 1239,37 1144,37" fill="#b6b6b6"/><polygon points="1141,34 1144,37 1144,54 1141,57" fill="#c4c4c4"/><polygon points="1242,34 1242,57 1239,54 1239,37" fill="#ececec"/><polygon points="1141,57 1144,54 1239,54 1242,57" fill="#efefef"/><rect x="1144" y="37" width="95" height="17" fill="#d4d4d4" /><text x="1146" y="49.7" font-size="12" font-weight="normal" fill="#000" text-anchor="start" textLength="35.70" lengthAdjust="spacingAndGlyphs" >294837</text><text x="1177" y="80.7" font-size="12" font-weight="normal" fill="#000" text-anchor="start" textLength="56.10" lengthAdjust="spacingAndGlyphs" >Stimulus Y</text><polygon points="1149,86 1175,86 1172,89 1152,89" fill="#c4c4c4"/><polygon points="1149,86 1152,89 1152,106 1149,109" fill="#cacaca"/><polygon points="1175,86 1175,109 1172,106 1172,89" fill="#ececec"/><polygon points="1149,109 1152,106 1172,106 1175,109" fill="#e4e4e4"/><rect x="1152" y="89" width="20" height="17" fill="#fbfbfb" /><ellipse cx="1141.5" cy="96.5" rx="6.5" ry="13.5" fill="#7c7c7c" shape-rendering="auto"/><ellipse cx="1141.0" cy="96.0" rx="5.6" ry="12.5" fill="#e6e6e6" shape-rendering="auto"/><ellipse cx="1141.5" cy="96.5" rx="5.1" ry="11.9" fill="url(#g15)" shape-rendering="auto"/><rect x="1136.0" y="95.0" width="11.0" height="1" fill="#8c8c8c" shape-rendering="auto"/><rect x="1136.0" y="96.0" width="11.0" height="1" fill="#ececec" shape-rendering="auto"/><g shape-rendering="auto"><path d="M1138.9,92.7 L1144.1,92.7 L1141.5,87.3" stroke="#f4f4f4" stroke-width="1" fill="none"/><path d="M1138.9,92.7 L1141.5,87.3" stroke="#303030" stroke-width="1.3" fill="none"/><path d="M1144.1,98.8 L1141.5,104.6" stroke="#f4f4f4" stroke-width="1" fill="none"/><path d="M1144.1,98.8 L1138.9,98.8 L1141.5,104.6" stroke="#303030" stroke-width="1.2" fill="none"/></g><text x="1154.5" y="101.5" font-size="12" font-weight="normal" fill="#000" text-anchor="start" textLength="5.95" lengthAdjust="spacingAndGlyphs" >0</text><polygon points="1176,85 1237,85 1233,89 1180,89" fill="rgba(160,160,160,0.35)"/><polygon points="1176,85 1180,89 1180,113 1176,117" fill="rgba(170,170,170,0.3)"/><polygon points="1237,85 1237,117 1233,113 1233,89" fill="rgba(255,255,255,0.4)"/><polygon points="1176,117 1180,113 1233,113 1237,117" fill="rgba(255,255,255,0.35)"/><polygon points="1180,89 1234,89 1230,93 1184,93" fill="#8e8e8e"/><polygon points="1180,89 1184,93 1184,110 1180,114" fill="#a4a4a4"/><polygon points="1234,89 1234,114 1230,110 1230,93" fill="#b4b4b4"/><polygon points="1180,114 1184,110 1230,110 1234,114" fill="#b8b8b8"/><rect x="1184" y="93" width="46" height="17" fill="#d4d4d4" /><text x="1186.5" y="105.6" font-size="12" font-weight="normal" fill="#000" text-anchor="start" textLength="5.95" lengthAdjust="spacingAndGlyphs" >0</text><text x="1141.5" y="450" font-size="12" font-weight="normal" fill="#000" text-anchor="start" textLength="65.30" lengthAdjust="spacingAndGlyphs" >startPosition</text><polygon points="1141,457 1210,457 1207,460 1144,460" fill="#b6b6b6"/><polygon points="1141,457 1144,460 1144,474 1141,477" fill="#c4c4c4"/><polygon points="1210,457 1210,477 1207,474 1207,460" fill="#ececec"/><polygon points="1141,477 1144,474 1207,474 1210,477" fill="#efefef"/><rect x="1144" y="460" width="63" height="14" fill="#d4d4d4" /><text x="1146" y="471" font-size="12" font-weight="normal" fill="#000" text-anchor="start" textLength="29.75" lengthAdjust="spacingAndGlyphs" >43485</text><text x="769.4" y="328" font-size="12" font-weight="normal" fill="#000" text-anchor="start" textLength="83.40" lengthAdjust="spacingAndGlyphs" >Peaks Locations</text><polygon points="730,335 767,335 764,338 733,338" fill="#c4c4c4"/><polygon points="730,335 733,338 733,355 730,358" fill="#cacaca"/><polygon points="767,335 767,358 764,355 764,338" fill="#ececec"/><polygon points="730,358 733,355 764,355 767,358" fill="#e4e4e4"/><rect x="733" y="338" width="31" height="17" fill="#fbfbfb" /><ellipse cx="723.5" cy="345.0" rx="6.5" ry="13.0" fill="#7c7c7c" shape-rendering="auto"/><ellipse cx="723.0" cy="344.5" rx="5.6" ry="12.0" fill="#e6e6e6" shape-rendering="auto"/><ellipse cx="723.5" cy="345.0" rx="5.1" ry="11.4" fill="url(#g16)" shape-rendering="auto"/><rect x="718.0" y="343.5" width="11.0" height="1" fill="#8c8c8c" shape-rendering="auto"/><rect x="718.0" y="344.5" width="11.0" height="1" fill="#ececec" shape-rendering="auto"/><g shape-rendering="auto"><path d="M720.9,341.2 L726.1,341.2 L723.5,335.8" stroke="#f4f4f4" stroke-width="1" fill="none"/><path d="M720.9,341.2 L723.5,335.8" stroke="#303030" stroke-width="1.3" fill="none"/><path d="M726.1,347.3 L723.5,353.1" stroke="#f4f4f4" stroke-width="1" fill="none"/><path d="M726.1,347.3 L720.9,347.3 L723.5,353.1" stroke="#303030" stroke-width="1.2" fill="none"/></g><text x="735.5" y="350.5" font-size="12" font-weight="normal" fill="#000" text-anchor="start" textLength="5.95" lengthAdjust="spacingAndGlyphs" >0</text><polygon points="769,335 846,335 843,338 772,338" fill="#c8c8c8"/><polygon points="769,335 772,338 772,463 769,466" fill="#c6c6c6"/><polygon points="846,335 846,466 843,463 843,338" fill="#e8e8e8"/><polygon points="769,466 772,463 843,463 846,466" fill="#eeeeee"/><rect x="772" y="338" width="54" height="125" fill="#bcbcbc" /><polygon points="772,338 826,338 822,342 776,342" fill="#c2c2c2"/><polygon points="772,338 776,342 776,359 772,363" fill="#bfbfbf"/><polygon points="826,338 826,363 822,359 822,342" fill="#cfcfcf"/><polygon points="772,363 776,359 822,359 826,363" fill="#c9c9c9"/><rect x="776" y="342" width="46" height="17" fill="#dcdcdc" /><text x="778.5" y="355" font-size="12" font-weight="normal" fill="#8c8c8c" text-anchor="start" textLength="5.95" lengthAdjust="spacingAndGlyphs" >0</text><polygon points="772,363 826,363 822,367 776,367" fill="#c2c2c2"/><polygon points="772,363 776,367 776,384 772,388" fill="#bfbfbf"/><polygon points="826,363 826,388 822,384 822,367" fill="#cfcfcf"/><polygon points="772,388 776,384 822,384 826,388" fill="#c9c9c9"/><rect x="776" y="367" width="46" height="17" fill="#dcdcdc" /><text x="778.5" y="380" font-size="12" font-weight="normal" fill="#8c8c8c" text-anchor="start" textLength="5.95" lengthAdjust="spacingAndGlyphs" >0</text><polygon points="772,388 826,388 822,392 776,392" fill="#c2c2c2"/><polygon points="772,388 776,392 776,409 772,413" fill="#bfbfbf"/><polygon points="826,388 826,413 822,409 822,392" fill="#cfcfcf"/><polygon points="772,413 776,409 822,409 826,413" fill="#c9c9c9"/><rect x="776" y="392" width="46" height="17" fill="#dcdcdc" /><text x="778.5" y="405" font-size="12" font-weight="normal" fill="#8c8c8c" text-anchor="start" textLength="5.95" lengthAdjust="spacingAndGlyphs" >0</text><polygon points="772,413 826,413 822,417 776,417" fill="#c2c2c2"/><polygon points="772,413 776,417 776,434 772,438" fill="#bfbfbf"/><polygon points="826,413 826,438 822,434 822,417" fill="#cfcfcf"/><polygon points="772,438 776,434 822,434 826,438" fill="#c9c9c9"/><rect x="776" y="417" width="46" height="17" fill="#dcdcdc" /><text x="778.5" y="430" font-size="12" font-weight="normal" fill="#8c8c8c" text-anchor="start" textLength="5.95" lengthAdjust="spacingAndGlyphs" >0</text><polygon points="772,438 826,438 822,442 776,442" fill="#c2c2c2"/><polygon points="772,438 776,442 776,459 772,463" fill="#bfbfbf"/><polygon points="826,438 826,463 822,459 822,442" fill="#cfcfcf"/><polygon points="772,463 776,459 822,459 826,463" fill="#c9c9c9"/><rect x="776" y="442" width="46" height="17" fill="#dcdcdc" /><text x="778.5" y="455" font-size="12" font-weight="normal" fill="#8c8c8c" text-anchor="start" textLength="5.95" lengthAdjust="spacingAndGlyphs" >0</text><rect x="826" y="338" width="17" height="125" fill="#f0f0f0" /><path d="M831.0,349 L834.5,345.5 L838.0,349" stroke="#404040" stroke-width="1.8" fill="none" shape-rendering="auto"/><path d="M831.0,453 L834.5,456.5 L838.0,453" stroke="#404040" stroke-width="1.8" fill="none" shape-rendering="auto"/><text x="913.4" y="328" font-size="12" font-weight="normal" fill="#000" text-anchor="start" textLength="89.40" lengthAdjust="spacingAndGlyphs" >Valleys Locations</text><polygon points="871,335 911,335 908,338 874,338" fill="#c4c4c4"/><polygon points="871,335 874,338 874,355 871,358" fill="#cacaca"/><polygon points="911,335 911,358 908,355 908,338" fill="#ececec"/><polygon points="871,358 874,355 908,355 911,358" fill="#e4e4e4"/><rect x="874" y="338" width="34" height="17" fill="#fbfbfb" /><ellipse cx="864.0" cy="345.0" rx="7.0" ry="13.0" fill="#7c7c7c" shape-rendering="auto"/><ellipse cx="863.5" cy="344.5" rx="6.1" ry="12.0" fill="#e6e6e6" shape-rendering="auto"/><ellipse cx="864.0" cy="345.0" rx="5.6" ry="11.4" fill="url(#g17)" shape-rendering="auto"/><rect x="858.0" y="343.5" width="12.0" height="1" fill="#8c8c8c" shape-rendering="auto"/><rect x="858.0" y="344.5" width="12.0" height="1" fill="#ececec" shape-rendering="auto"/><g shape-rendering="auto"><path d="M861.4,341.2 L866.6,341.2 L864.0,335.8" stroke="#f4f4f4" stroke-width="1" fill="none"/><path d="M861.4,341.2 L864.0,335.8" stroke="#303030" stroke-width="1.3" fill="none"/><path d="M866.6,347.3 L864.0,353.1" stroke="#f4f4f4" stroke-width="1" fill="none"/><path d="M866.6,347.3 L861.4,347.3 L864.0,353.1" stroke="#303030" stroke-width="1.2" fill="none"/></g><text x="876.5" y="350.5" font-size="12" font-weight="normal" fill="#000" text-anchor="start" textLength="5.95" lengthAdjust="spacingAndGlyphs" >0</text><polygon points="913,335 990,335 987,338 916,338" fill="#c8c8c8"/><polygon points="913,335 916,338 916,463 913,466" fill="#c6c6c6"/><polygon points="990,335 990,466 987,463 987,338" fill="#e8e8e8"/><polygon points="913,466 916,463 987,463 990,466" fill="#eeeeee"/><rect x="916" y="338" width="54" height="125" fill="#bcbcbc" /><polygon points="916,338 970,338 966,342 920,342" fill="#c2c2c2"/><polygon points="916,338 920,342 920,359 916,363" fill="#bfbfbf"/><polygon points="970,338 970,363 966,359 966,342" fill="#cfcfcf"/><polygon points="916,363 920,359 966,359 970,363" fill="#c9c9c9"/><rect x="920" y="342" width="46" height="17" fill="#dcdcdc" /><text x="922.5" y="355" font-size="12" font-weight="normal" fill="#8c8c8c" text-anchor="start" textLength="5.95" lengthAdjust="spacingAndGlyphs" >0</text><polygon points="916,363 970,363 966,367 920,367" fill="#c2c2c2"/><polygon points="916,363 920,367 920,384 916,388" fill="#bfbfbf"/><polygon points="970,363 970,388 966,384 966,367" fill="#cfcfcf"/><polygon points="916,388 920,384 966,384 970,388" fill="#c9c9c9"/><rect x="920" y="367" width="46" height="17" fill="#dcdcdc" /><text x="922.5" y="380" font-size="12" font-weight="normal" fill="#8c8c8c" text-anchor="start" textLength="5.95" lengthAdjust="spacingAndGlyphs" >0</text><polygon points="916,388 970,388 966,392 920,392" fill="#c2c2c2"/><polygon points="916,388 920,392 920,409 916,413" fill="#bfbfbf"/><polygon points="970,388 970,413 966,409 966,392" fill="#cfcfcf"/><polygon points="916,413 920,409 966,409 970,413" fill="#c9c9c9"/><rect x="920" y="392" width="46" height="17" fill="#dcdcdc" /><text x="922.5" y="405" font-size="12" font-weight="normal" fill="#8c8c8c" text-anchor="start" textLength="5.95" lengthAdjust="spacingAndGlyphs" >0</text><polygon points="916,413 970,413 966,417 920,417" fill="#c2c2c2"/><polygon points="916,413 920,417 920,434 916,438" fill="#bfbfbf"/><polygon points="970,413 970,438 966,434 966,417" fill="#cfcfcf"/><polygon points="916,438 920,434 966,434 970,438" fill="#c9c9c9"/><rect x="920" y="417" width="46" height="17" fill="#dcdcdc" /><text x="922.5" y="430" font-size="12" font-weight="normal" fill="#8c8c8c" text-anchor="start" textLength="5.95" lengthAdjust="spacingAndGlyphs" >0</text><polygon points="916,438 970,438 966,442 920,442" fill="#c2c2c2"/><polygon points="916,438 920,442 920,459 916,463" fill="#bfbfbf"/><polygon points="970,438 970,463 966,459 966,442" fill="#cfcfcf"/><polygon points="916,463 920,459 966,459 970,463" fill="#c9c9c9"/><rect x="920" y="442" width="46" height="17" fill="#dcdcdc" /><text x="922.5" y="455" font-size="12" font-weight="normal" fill="#8c8c8c" text-anchor="start" textLength="5.95" lengthAdjust="spacingAndGlyphs" >0</text><rect x="970" y="338" width="17" height="125" fill="#f0f0f0" /><path d="M975.0,349 L978.5,345.5 L982.0,349" stroke="#404040" stroke-width="1.8" fill="none" shape-rendering="auto"/><path d="M975.0,453 L978.5,456.5 L982.0,453" stroke="#404040" stroke-width="1.8" fill="none" shape-rendering="auto"/><rect x="474" y="20" width="90" height="24" fill="#c8c8c8" /><rect x="474" y="20" width="14" height="24" fill="url(#g18)" /><rect x="550" y="20" width="14" height="24" fill="url(#g19)" /><rect x="474" y="20" width="90" height="1" fill="#d6d6d6" /><rect x="477" y="42" width="86" height="2" fill="url(#g20)" /><rect x="474" y="42" width="3" height="2" fill="#e3e3e3" /><rect x="489" y="24" width="19" height="16" fill="#c8c8c8" /><rect x="489" y="24" width="19" height="1" fill="#d8d8d8" /><rect x="489" y="39" width="19" height="1" fill="#9a9a9a" /><rect x="507" y="24" width="1" height="16" fill="#b0b0b0" /><rect x="492" y="27" width="3" height="3" fill="#3a6a3a" /><rect x="509" y="24" width="19" height="16" fill="#8e8e8e" /><rect x="509" y="24" width="19" height="1" fill="#9a9a9a" /><rect x="509" y="39" width="19" height="1" fill="#6a6a6a" /><rect x="527" y="24" width="1" height="16" fill="#7a7a7a" /><rect x="512" y="27" width="3" height="3" fill="#50e050" /><rect x="531" y="24" width="19" height="16" fill="#c8c8c8" /><rect x="531" y="24" width="19" height="1" fill="#d8d8d8" /><rect x="531" y="39" width="19" height="1" fill="#9a9a9a" /><rect x="549" y="24" width="1" height="16" fill="#b0b0b0" /><rect x="534" y="27" width="3" height="3" fill="#3a6a3a" /><rect x="492" y="32" width="13" height="1" fill="#000" /><rect x="498" y="26" width="1" height="14" fill="#000" /><circle cx="498.5" cy="32.5" r="1.6" fill="#fff" stroke="#000" stroke-width="1" shape-rendering="auto"/><circle cx="521.5" cy="30.5" r="4.2" fill="#d8d8f8" stroke="#000" stroke-width="1.1" shape-rendering="auto"/><rect x="519" y="30" width="5" height="1" fill="#000" /><rect x="521" y="28" width="1" height="5" fill="#000" /><path d="M513,38.5 L518,34" stroke="#000" stroke-width="2.2" shape-rendering="auto"/><path d="M513.3,38.2 L517.7,34.3" stroke="#d0d0d0" stroke-width="0.7" shape-rendering="auto"/><polygon points="521,36 526,36 523.5,39" fill="#000" shape-rendering="auto"/><g transform="translate(534.2,26) scale(1.25,1)" shape-rendering="auto" fill="none" stroke="#000" stroke-width="0.8"><path d="M3.4,12 L0.6,7.8 Q0.6,6.6 1.8,7 L3.6,8.6 L3.6,2.2 Q4.3,1.2 5,2.2 L5,6.5 M5,6.5 L5,0.9 Q5.8,-0.1 6.6,0.9 L6.6,6.5 M6.6,6.5 L6.6,1.2 Q7.4,0.3 8.2,1.3 L8.2,6.5 M8.2,6.5 L8.2,2.6 Q9,1.8 9.8,2.8 L9.8,9 L8.8,12"/></g><rect x="572" y="19" width="100" height="23" fill="#c4c4c4" /><rect x="572" y="19" width="16" height="23" fill="url(#g21)" /><rect x="658" y="19" width="14" height="23" fill="url(#g22)" /><rect x="572" y="19" width="100" height="1" fill="#d2d2d2" /><rect x="575" y="40" width="96" height="2" fill="url(#g23)" /><rect x="572" y="40" width="3" height="2" fill="#e3e3e3" /><text x="588.5" y="34" font-size="12" font-weight="normal" fill="#000" text-anchor="start" textLength="29.96" lengthAdjust="spacingAndGlyphs" >Plot 0</text><rect x="629" y="21" width="29" height="19" fill="#e8e8e8" /><rect x="629" y="21" width="28" height="18" fill="#000" /><path d="M631.5,34.5 L639.5,24 L648,34.5 L656,24" stroke="#fff" stroke-width="1.1" fill="none" shape-rendering="auto"/><rect x="931" y="19" width="90" height="24" fill="#c8c8c8" /><rect x="931" y="19" width="14" height="24" fill="url(#g24)" /><rect x="1007" y="19" width="14" height="24" fill="url(#g25)" /><rect x="931" y="19" width="90" height="1" fill="#d6d6d6" /><rect x="934" y="41" width="86" height="2" fill="url(#g26)" /><rect x="931" y="41" width="3" height="2" fill="#e3e3e3" /><rect x="946" y="23" width="19" height="16" fill="#c8c8c8" /><rect x="946" y="23" width="19" height="1" fill="#d8d8d8" /><rect x="946" y="38" width="19" height="1" fill="#9a9a9a" /><rect x="964" y="23" width="1" height="16" fill="#b0b0b0" /><rect x="949" y="26" width="3" height="3" fill="#3a6a3a" /><rect x="966" y="23" width="19" height="16" fill="#8e8e8e" /><rect x="966" y="23" width="19" height="1" fill="#9a9a9a" /><rect x="966" y="38" width="19" height="1" fill="#6a6a6a" /><rect x="984" y="23" width="1" height="16" fill="#7a7a7a" /><rect x="969" y="26" width="3" height="3" fill="#50e050" /><rect x="988" y="23" width="19" height="16" fill="#c8c8c8" /><rect x="988" y="23" width="19" height="1" fill="#d8d8d8" /><rect x="988" y="38" width="19" height="1" fill="#9a9a9a" /><rect x="1006" y="23" width="1" height="16" fill="#b0b0b0" /><rect x="991" y="26" width="3" height="3" fill="#3a6a3a" /><rect x="949" y="31" width="13" height="1" fill="#000" /><rect x="955" y="25" width="1" height="14" fill="#000" /><circle cx="955.5" cy="31.5" r="1.6" fill="#fff" stroke="#000" stroke-width="1" shape-rendering="auto"/><circle cx="978.5" cy="29.5" r="4.2" fill="#d8d8f8" stroke="#000" stroke-width="1.1" shape-rendering="auto"/><rect x="976" y="29" width="5" height="1" fill="#000" /><rect x="978" y="27" width="1" height="5" fill="#000" /><path d="M970,37.5 L975,33" stroke="#000" stroke-width="2.2" shape-rendering="auto"/><path d="M970.3,37.2 L974.7,33.3" stroke="#d0d0d0" stroke-width="0.7" shape-rendering="auto"/><polygon points="978,35 983,35 980.5,38" fill="#000" shape-rendering="auto"/><g transform="translate(991.2,25) scale(1.25,1)" shape-rendering="auto" fill="none" stroke="#000" stroke-width="0.8"><path d="M3.4,12 L0.6,7.8 Q0.6,6.6 1.8,7 L3.6,8.6 L3.6,2.2 Q4.3,1.2 5,2.2 L5,6.5 M5,6.5 L5,0.9 Q5.8,-0.1 6.6,0.9 L6.6,6.5 M6.6,6.5 L6.6,1.2 Q7.4,0.3 8.2,1.3 L8.2,6.5 M8.2,6.5 L8.2,2.6 Q9,1.8 9.8,2.8 L9.8,9 L8.8,12"/></g><rect x="1028" y="19" width="100" height="23" fill="#c4c4c4" /><rect x="1028" y="19" width="16" height="23" fill="url(#g27)" /><rect x="1114" y="19" width="14" height="23" fill="url(#g28)" /><rect x="1028" y="19" width="100" height="1" fill="#d2d2d2" /><rect x="1031" y="40" width="96" height="2" fill="url(#g29)" /><rect x="1028" y="40" width="3" height="2" fill="#e3e3e3" /><text x="1044.5" y="34" font-size="12" font-weight="normal" fill="#000" text-anchor="start" textLength="29.96" lengthAdjust="spacingAndGlyphs" >Plot 0</text><rect x="1085" y="21" width="29" height="19" fill="#e8e8e8" /><rect x="1085" y="21" width="28" height="18" fill="#000" /><path d="M1087.5,34.5 L1095.5,24 L1104,34.5 L1112,24" stroke="#fff" stroke-width="1.1" fill="none" shape-rendering="auto"/><g clip-path="url(#clipcut)"><rect x="470" y="272" width="90" height="24" fill="#c8c8c8" /><rect x="470" y="272" width="14" height="24" fill="url(#g30)" /><rect x="546" y="272" width="14" height="24" fill="url(#g31)" /><rect x="470" y="272" width="90" height="1" fill="#d6d6d6" /><rect x="473" y="294" width="86" height="2" fill="url(#g32)" /><rect x="470" y="294" width="3" height="2" fill="#e3e3e3" /><rect x="485" y="276" width="19" height="16" fill="#c8c8c8" /><rect x="485" y="276" width="19" height="1" fill="#d8d8d8" /><rect x="485" y="291" width="19" height="1" fill="#9a9a9a" /><rect x="503" y="276" width="1" height="16" fill="#b0b0b0" /><rect x="488" y="279" width="3" height="3" fill="#3a6a3a" /><rect x="505" y="276" width="19" height="16" fill="#8e8e8e" /><rect x="505" y="276" width="19" height="1" fill="#9a9a9a" /><rect x="505" y="291" width="19" height="1" fill="#6a6a6a" /><rect x="523" y="276" width="1" height="16" fill="#7a7a7a" /><rect x="508" y="279" width="3" height="3" fill="#50e050" /><rect x="527" y="276" width="19" height="16" fill="#c8c8c8" /><rect x="527" y="276" width="19" height="1" fill="#d8d8d8" /><rect x="527" y="291" width="19" height="1" fill="#9a9a9a" /><rect x="545" y="276" width="1" height="16" fill="#b0b0b0" /><rect x="530" y="279" width="3" height="3" fill="#3a6a3a" /><rect x="488" y="284" width="13" height="1" fill="#000" /><rect x="494" y="278" width="1" height="14" fill="#000" /><circle cx="494.5" cy="284.5" r="1.6" fill="#fff" stroke="#000" stroke-width="1" shape-rendering="auto"/><circle cx="517.5" cy="282.5" r="4.2" fill="#d8d8f8" stroke="#000" stroke-width="1.1" shape-rendering="auto"/><rect x="515" y="282" width="5" height="1" fill="#000" /><rect x="517" y="280" width="1" height="5" fill="#000" /><path d="M509,290.5 L514,286" stroke="#000" stroke-width="2.2" shape-rendering="auto"/><path d="M509.3,290.2 L513.7,286.3" stroke="#d0d0d0" stroke-width="0.7" shape-rendering="auto"/><polygon points="517,288 522,288 519.5,291" fill="#000" shape-rendering="auto"/><g transform="translate(530.2,278) scale(1.25,1)" shape-rendering="auto" fill="none" stroke="#000" stroke-width="0.8"><path d="M3.4,12 L0.6,7.8 Q0.6,6.6 1.8,7 L3.6,8.6 L3.6,2.2 Q4.3,1.2 5,2.2 L5,6.5 M5,6.5 L5,0.9 Q5.8,-0.1 6.6,0.9 L6.6,6.5 M6.6,6.5 L6.6,1.2 Q7.4,0.3 8.2,1.3 L8.2,6.5 M8.2,6.5 L8.2,2.6 Q9,1.8 9.8,2.8 L9.8,9 L8.8,12"/></g><rect x="572" y="271" width="100" height="23" fill="#c4c4c4" /><rect x="572" y="271" width="16" height="23" fill="url(#g33)" /><rect x="658" y="271" width="14" height="23" fill="url(#g34)" /><rect x="572" y="271" width="100" height="1" fill="#d2d2d2" /><rect x="575" y="292" width="96" height="2" fill="url(#g35)" /><rect x="572" y="292" width="3" height="2" fill="#e3e3e3" /><text x="588.5" y="286" font-size="12" font-weight="normal" fill="#000" text-anchor="start" textLength="29.96" lengthAdjust="spacingAndGlyphs" >Plot 0</text><rect x="629" y="273" width="29" height="19" fill="#e8e8e8" /><rect x="629" y="273" width="28" height="18" fill="#000" /><path d="M631.5,286.5 L639.5,276 L648,286.5 L656,276" stroke="#fff" stroke-width="1.1" fill="none" shape-rendering="auto"/></g></svg></body></html>
